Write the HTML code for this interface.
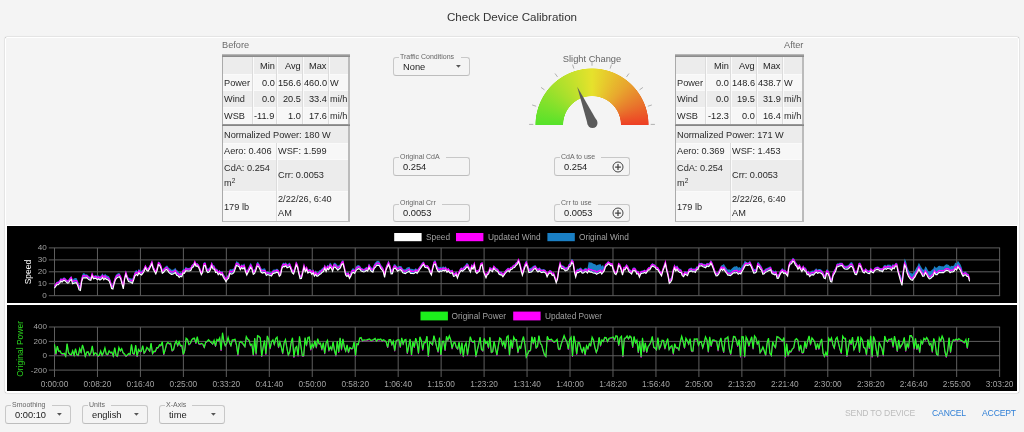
<!DOCTYPE html><html><head><meta charset="utf-8"><style>
html,body{margin:0;padding:0;}
body{width:1024px;height:432px;overflow:hidden;background:#f4f4f4;position:relative;font-family:"Liberation Sans", sans-serif;}
.t{position:absolute;white-space:nowrap;will-change:transform;}
.r{position:absolute;box-sizing:border-box;}
svg{position:absolute;will-change:transform;}
</style></head><body>
<div class="t" style="left:312px;width:400px;text-align:center;top:9.82px;font-size:11.6px;line-height:13.92px;color:#333;">Check Device Calibration</div>
<div class="r" style="left:5px;top:37px;width:1014px;height:356px;border:1px solid #fff;border-radius:2px;box-shadow:0 0 1.2px rgba(0,0,0,0.45);background:#f4f4f4;"></div>
<div class="t" style="left:222px;top:40.09px;font-size:9.2px;line-height:11.04px;color:#6a6a6a;">Before</div>
<div class="r" style="left:222px;top:54px;width:128px;height:168px;background:#f6f6f6;border-left:1px solid #aaa;border-right:2px solid #bbb;border-bottom:1px solid #bbb;"></div>
<div class="r" style="left:223px;top:57px;width:125px;height:17px;background:#ececec;"></div>
<div class="r" style="left:223px;top:74px;width:125px;height:16px;background:#f7f7f7;border-top:1px solid #fafafa;"></div>
<div class="r" style="left:223px;top:90px;width:125px;height:17px;background:#ececec;border-top:1px solid #fafafa;"></div>
<div class="r" style="left:223px;top:107px;width:125px;height:17px;background:#f7f7f7;border-top:1px solid #fafafa;"></div>
<div class="r" style="left:252px;top:57px;width:1px;height:67px;background:#dcdcdc;"></div>
<div class="r" style="left:253px;top:57px;width:1px;height:67px;background:#fbfbfb;"></div>
<div class="r" style="left:276px;top:57px;width:1px;height:67px;background:#dcdcdc;"></div>
<div class="r" style="left:277px;top:57px;width:1px;height:67px;background:#fbfbfb;"></div>
<div class="r" style="left:302px;top:57px;width:1px;height:67px;background:#dcdcdc;"></div>
<div class="r" style="left:303px;top:57px;width:1px;height:67px;background:#fbfbfb;"></div>
<div class="r" style="left:328px;top:57px;width:1px;height:67px;background:#dcdcdc;"></div>
<div class="r" style="left:329px;top:57px;width:1px;height:67px;background:#fbfbfb;"></div>
<div class="r" style="left:222px;top:54px;width:128px;height:3px;background:linear-gradient(#c4c4c4,#9a9a9a 50%,#858585);"></div>
<div class="r" style="left:223px;top:126px;width:125px;height:17px;background:#ececec;"></div>
<div class="r" style="left:223px;top:143px;width:125px;height:16px;background:#f7f7f7;border-top:1px solid #fafafa;"></div>
<div class="r" style="left:223px;top:159px;width:125px;height:32px;background:#ececec;border-top:1px solid #fafafa;"></div>
<div class="r" style="left:223px;top:191px;width:125px;height:30px;background:#f7f7f7;border-top:1px solid #fafafa;"></div>
<div class="r" style="left:276px;top:143px;width:1px;height:78px;background:#dcdcdc;"></div>
<div class="r" style="left:277px;top:143px;width:1px;height:78px;background:#fbfbfb;"></div>
<div class="r" style="left:222px;top:123.5px;width:128px;height:2.5px;background:linear-gradient(#a0a0a0,#7c7c7c);"></div>
<div class="t" style="right:749.5px;top:61.09px;font-size:9.2px;line-height:11.04px;color:#222;">Min</div>
<div class="t" style="right:723.5px;top:61.09px;font-size:9.2px;line-height:11.04px;color:#222;">Avg</div>
<div class="t" style="right:697.5px;top:61.09px;font-size:9.2px;line-height:11.04px;color:#222;">Max</div>
<div class="t" style="left:224px;top:77.79px;font-size:9.2px;line-height:11.04px;color:#2a2a2a;">Power</div>
<div class="t" style="right:749.5px;top:77.79px;font-size:9.2px;line-height:11.04px;color:#222;">0.0</div>
<div class="t" style="right:723.5px;top:77.79px;font-size:9.2px;line-height:11.04px;color:#222;">156.6</div>
<div class="t" style="right:697.5px;top:77.79px;font-size:9.2px;line-height:11.04px;color:#222;">460.0</div>
<div class="t" style="left:329.5px;top:77.79px;font-size:9.2px;line-height:11.04px;color:#2a2a2a;">W</div>
<div class="t" style="left:224px;top:94.29px;font-size:9.2px;line-height:11.04px;color:#2a2a2a;">Wind</div>
<div class="t" style="right:749.5px;top:94.29px;font-size:9.2px;line-height:11.04px;color:#222;">0.0</div>
<div class="t" style="right:723.5px;top:94.29px;font-size:9.2px;line-height:11.04px;color:#222;">20.5</div>
<div class="t" style="right:697.5px;top:94.29px;font-size:9.2px;line-height:11.04px;color:#222;">33.4</div>
<div class="t" style="left:329.5px;top:94.29px;font-size:9.2px;line-height:11.04px;color:#2a2a2a;">mi/h</div>
<div class="t" style="left:224px;top:110.79px;font-size:9.2px;line-height:11.04px;color:#2a2a2a;">WSB</div>
<div class="t" style="right:749.5px;top:110.79px;font-size:9.2px;line-height:11.04px;color:#222;">-11.9</div>
<div class="t" style="right:723.5px;top:110.79px;font-size:9.2px;line-height:11.04px;color:#222;">1.0</div>
<div class="t" style="right:697.5px;top:110.79px;font-size:9.2px;line-height:11.04px;color:#222;">17.6</div>
<div class="t" style="left:329.5px;top:110.79px;font-size:9.2px;line-height:11.04px;color:#2a2a2a;">mi/h</div>
<div class="t" style="left:224px;top:130.29px;font-size:9.2px;line-height:11.04px;color:#2a2a2a;">Normalized Power: 180 W</div>
<div class="t" style="left:224px;top:146.09px;font-size:9.2px;line-height:11.04px;color:#2a2a2a;">Aero: 0.406</div>
<div class="t" style="left:278px;top:146.09px;font-size:9.2px;line-height:11.04px;color:#2a2a2a;">WSF: 1.599</div>
<div class="t" style="left:224px;top:163.29px;font-size:9.2px;line-height:11.04px;color:#2a2a2a;">CdA: 0.254</div>
<div class="t" style="left:224px;top:177.69px;font-size:9.2px;line-height:11.04px;color:#2a2a2a;">m<sup style="font-size:6.5px;vertical-align:3.5px;line-height:0">2</sup></div>
<div class="t" style="left:278px;top:170.29px;font-size:9.2px;line-height:11.04px;color:#2a2a2a;">Crr: 0.0053</div>
<div class="t" style="left:224px;top:201.79px;font-size:9.2px;line-height:11.04px;color:#2a2a2a;">179 lb</div>
<div class="t" style="left:278px;top:193.59px;font-size:9.2px;line-height:11.04px;color:#2a2a2a;">2/22/26, 6:40</div>
<div class="t" style="left:278px;top:207.59px;font-size:9.2px;line-height:11.04px;color:#2a2a2a;">AM</div>
<div class="t" style="right:221px;top:40.09px;font-size:9.2px;line-height:11.04px;color:#6a6a6a;">After</div>
<div class="r" style="left:675px;top:54px;width:129px;height:168px;background:#f6f6f6;border-left:1px solid #aaa;border-right:2px solid #bbb;border-bottom:1px solid #bbb;"></div>
<div class="r" style="left:676px;top:57px;width:126px;height:17px;background:#ececec;"></div>
<div class="r" style="left:676px;top:74px;width:126px;height:16px;background:#f7f7f7;border-top:1px solid #fafafa;"></div>
<div class="r" style="left:676px;top:90px;width:126px;height:17px;background:#ececec;border-top:1px solid #fafafa;"></div>
<div class="r" style="left:676px;top:107px;width:126px;height:17px;background:#f7f7f7;border-top:1px solid #fafafa;"></div>
<div class="r" style="left:705px;top:57px;width:1px;height:67px;background:#dcdcdc;"></div>
<div class="r" style="left:706px;top:57px;width:1px;height:67px;background:#fbfbfb;"></div>
<div class="r" style="left:730px;top:57px;width:1px;height:67px;background:#dcdcdc;"></div>
<div class="r" style="left:731px;top:57px;width:1px;height:67px;background:#fbfbfb;"></div>
<div class="r" style="left:756px;top:57px;width:1px;height:67px;background:#dcdcdc;"></div>
<div class="r" style="left:757px;top:57px;width:1px;height:67px;background:#fbfbfb;"></div>
<div class="r" style="left:782px;top:57px;width:1px;height:67px;background:#dcdcdc;"></div>
<div class="r" style="left:783px;top:57px;width:1px;height:67px;background:#fbfbfb;"></div>
<div class="r" style="left:675px;top:54px;width:129px;height:3px;background:linear-gradient(#c4c4c4,#9a9a9a 50%,#858585);"></div>
<div class="r" style="left:676px;top:126px;width:126px;height:17px;background:#ececec;"></div>
<div class="r" style="left:676px;top:143px;width:126px;height:16px;background:#f7f7f7;border-top:1px solid #fafafa;"></div>
<div class="r" style="left:676px;top:159px;width:126px;height:32px;background:#ececec;border-top:1px solid #fafafa;"></div>
<div class="r" style="left:676px;top:191px;width:126px;height:30px;background:#f7f7f7;border-top:1px solid #fafafa;"></div>
<div class="r" style="left:730px;top:143px;width:1px;height:78px;background:#dcdcdc;"></div>
<div class="r" style="left:731px;top:143px;width:1px;height:78px;background:#fbfbfb;"></div>
<div class="r" style="left:675px;top:123.5px;width:129px;height:2.5px;background:linear-gradient(#a0a0a0,#7c7c7c);"></div>
<div class="t" style="right:295.5px;top:61.09px;font-size:9.2px;line-height:11.04px;color:#222;">Min</div>
<div class="t" style="right:269.5px;top:61.09px;font-size:9.2px;line-height:11.04px;color:#222;">Avg</div>
<div class="t" style="right:243.5px;top:61.09px;font-size:9.2px;line-height:11.04px;color:#222;">Max</div>
<div class="t" style="left:677px;top:77.79px;font-size:9.2px;line-height:11.04px;color:#2a2a2a;">Power</div>
<div class="t" style="right:295.5px;top:77.79px;font-size:9.2px;line-height:11.04px;color:#222;">0.0</div>
<div class="t" style="right:269.5px;top:77.79px;font-size:9.2px;line-height:11.04px;color:#222;">148.6</div>
<div class="t" style="right:243.5px;top:77.79px;font-size:9.2px;line-height:11.04px;color:#222;">438.7</div>
<div class="t" style="left:783.5px;top:77.79px;font-size:9.2px;line-height:11.04px;color:#2a2a2a;">W</div>
<div class="t" style="left:677px;top:94.29px;font-size:9.2px;line-height:11.04px;color:#2a2a2a;">Wind</div>
<div class="t" style="right:295.5px;top:94.29px;font-size:9.2px;line-height:11.04px;color:#222;">0.0</div>
<div class="t" style="right:269.5px;top:94.29px;font-size:9.2px;line-height:11.04px;color:#222;">19.5</div>
<div class="t" style="right:243.5px;top:94.29px;font-size:9.2px;line-height:11.04px;color:#222;">31.9</div>
<div class="t" style="left:783.5px;top:94.29px;font-size:9.2px;line-height:11.04px;color:#2a2a2a;">mi/h</div>
<div class="t" style="left:677px;top:110.79px;font-size:9.2px;line-height:11.04px;color:#2a2a2a;">WSB</div>
<div class="t" style="right:295.5px;top:110.79px;font-size:9.2px;line-height:11.04px;color:#222;">-12.3</div>
<div class="t" style="right:269.5px;top:110.79px;font-size:9.2px;line-height:11.04px;color:#222;">0.0</div>
<div class="t" style="right:243.5px;top:110.79px;font-size:9.2px;line-height:11.04px;color:#222;">16.4</div>
<div class="t" style="left:783.5px;top:110.79px;font-size:9.2px;line-height:11.04px;color:#2a2a2a;">mi/h</div>
<div class="t" style="left:677px;top:130.29px;font-size:9.2px;line-height:11.04px;color:#2a2a2a;">Normalized Power: 171 W</div>
<div class="t" style="left:677px;top:146.09px;font-size:9.2px;line-height:11.04px;color:#2a2a2a;">Aero: 0.369</div>
<div class="t" style="left:732px;top:146.09px;font-size:9.2px;line-height:11.04px;color:#2a2a2a;">WSF: 1.453</div>
<div class="t" style="left:677px;top:163.29px;font-size:9.2px;line-height:11.04px;color:#2a2a2a;">CdA: 0.254</div>
<div class="t" style="left:677px;top:177.69px;font-size:9.2px;line-height:11.04px;color:#2a2a2a;">m<sup style="font-size:6.5px;vertical-align:3.5px;line-height:0">2</sup></div>
<div class="t" style="left:732px;top:170.29px;font-size:9.2px;line-height:11.04px;color:#2a2a2a;">Crr: 0.0053</div>
<div class="t" style="left:677px;top:201.79px;font-size:9.2px;line-height:11.04px;color:#2a2a2a;">179 lb</div>
<div class="t" style="left:732px;top:193.59px;font-size:9.2px;line-height:11.04px;color:#2a2a2a;">2/22/26, 6:40</div>
<div class="t" style="left:732px;top:207.59px;font-size:9.2px;line-height:11.04px;color:#2a2a2a;">AM</div>
<div class="r" style="left:393px;top:57px;width:76.5px;height:19px;border:1px solid #c8c8c8;border-bottom-color:#bdbdbd;border-radius:3px;"></div>
<div class="r" style="left:398.5px;top:56px;width:62.4px;height:2px;background:#f4f4f4;"></div>
<div class="t" style="left:400px;top:52.67px;font-size:7px;line-height:8.40px;color:#666;">Traffic Conditions</div>
<div class="t" style="left:402.5px;top:61.90px;font-size:9.3px;line-height:11.16px;color:#222;">None</div>
<svg style="left:455.7px;top:65.4px" width="6" height="4"><path d="M0 0 L4.8 0 L2.4 2.7 Z" fill="#555"/></svg>
<div class="r" style="left:393px;top:157px;width:77px;height:19px;border:1px solid #c8c8c8;border-bottom-color:#bdbdbd;border-radius:3px;"></div>
<div class="r" style="left:398.5px;top:156px;width:47px;height:2px;background:#f4f4f4;"></div>
<div class="t" style="left:400px;top:152.67px;font-size:7px;line-height:8.40px;color:#666;">Original CdA</div>
<div class="t" style="left:402.5px;top:161.90px;font-size:9.3px;line-height:11.16px;color:#222;">0.254</div>
<div class="r" style="left:554px;top:157px;width:76px;height:19px;border:1px solid #c8c8c8;border-bottom-color:#bdbdbd;border-radius:3px;"></div>
<div class="r" style="left:559.5px;top:156px;width:41.7px;height:2px;background:#f4f4f4;"></div>
<div class="t" style="left:561px;top:152.67px;font-size:7px;line-height:8.40px;color:#666;">CdA to use</div>
<div class="t" style="left:563.5px;top:161.90px;font-size:9.3px;line-height:11.16px;color:#222;">0.254</div>
<svg style="left:611.1px;top:159.5px" width="14" height="14"><circle cx="7" cy="7" r="5.0" fill="none" stroke="#444" stroke-width="1.0"/><path d="M4.1 7 H9.9 M7 4.1 V9.9" stroke="#444" stroke-width="1.25"/></svg>
<div class="r" style="left:393px;top:203.5px;width:77px;height:18.5px;border:1px solid #c8c8c8;border-bottom-color:#bdbdbd;border-radius:3px;"></div>
<div class="r" style="left:398.5px;top:202.5px;width:43.5px;height:2px;background:#f4f4f4;"></div>
<div class="t" style="left:400px;top:199.17px;font-size:7px;line-height:8.40px;color:#666;">Original Crr</div>
<div class="t" style="left:402.5px;top:208.40px;font-size:9.3px;line-height:11.16px;color:#222;">0.0053</div>
<div class="r" style="left:554px;top:203.5px;width:76px;height:18.5px;border:1px solid #c8c8c8;border-bottom-color:#bdbdbd;border-radius:3px;"></div>
<div class="r" style="left:559.5px;top:202.5px;width:38.2px;height:2px;background:#f4f4f4;"></div>
<div class="t" style="left:561px;top:199.17px;font-size:7px;line-height:8.40px;color:#666;">Crr to use</div>
<div class="t" style="left:563.5px;top:208.40px;font-size:9.3px;line-height:11.16px;color:#222;">0.0053</div>
<svg style="left:611.1px;top:206.0px" width="14" height="14"><circle cx="7" cy="7" r="5.0" fill="none" stroke="#444" stroke-width="1.0"/><path d="M4.1 7 H9.9 M7 4.1 V9.9" stroke="#444" stroke-width="1.25"/></svg>
<div class="t" style="left:391.9px;width:400px;text-align:center;top:54.10px;font-size:9.3px;line-height:11.16px;color:#666;">Slight Change</div>
<div class="r" style="left:535.0px;top:68.30000000000001px;width:113.8px;height:56.9px;background:conic-gradient(from 270deg at 50% 100%, #55e22a 0deg, #a4e02c 45deg, #e6e22c 90deg, #e8a62e 130deg, #e8762c 155deg, #ee3e24 180deg, #ee3e24 360deg);-webkit-mask-image:radial-gradient(circle at 50% 100%, transparent 28.5px, #000 29.1px, #000 56.3px, transparent 56.9px);"></div>
<svg style="left:521.9px;top:55.2px" width="140" height="80"><path d="M11.30 69.40 L7.10 69.40 M14.17 51.26 L10.18 49.96 M22.51 34.90 L19.11 32.43 M35.50 21.91 L33.03 18.51 M51.86 13.57 L50.56 9.58 M70.00 10.70 L70.00 6.50 M88.14 13.57 L89.44 9.58 M104.50 21.91 L106.97 18.51 M117.49 34.90 L120.89 32.43 M125.83 51.26 L129.82 49.96 M128.70 69.40 L132.90 69.40" stroke="#a8a8a8" stroke-width="0.9"/></svg>
<svg style="left:521.9px;top:55.2px" width="140" height="80"><path d="M75.11 66.16 L55.20 31.80 L65.89 70.04 Z" fill="#5a5a5a"/><circle cx="70.50" cy="68.10" r="5.0" fill="#5a5a5a"/></svg>
<div class="r" style="left:6px;top:225px;width:1012px;height:79px;background:#000;border:1px solid #fff;"></div>
<div class="r" style="left:6px;top:304px;width:1012px;height:88px;background:#000;border:1px solid #fff;"></div>
<svg style="left:0;top:0" width="1024" height="432">
<line x1="54.50" y1="247.9" x2="54.50" y2="295.8" stroke="#5e5e5e" stroke-width="1"/>
<line x1="97.46" y1="247.9" x2="97.46" y2="295.8" stroke="#5e5e5e" stroke-width="1"/>
<line x1="140.42" y1="247.9" x2="140.42" y2="295.8" stroke="#5e5e5e" stroke-width="1"/>
<line x1="183.38" y1="247.9" x2="183.38" y2="295.8" stroke="#5e5e5e" stroke-width="1"/>
<line x1="226.34" y1="247.9" x2="226.34" y2="295.8" stroke="#5e5e5e" stroke-width="1"/>
<line x1="269.30" y1="247.9" x2="269.30" y2="295.8" stroke="#5e5e5e" stroke-width="1"/>
<line x1="312.26" y1="247.9" x2="312.26" y2="295.8" stroke="#5e5e5e" stroke-width="1"/>
<line x1="355.22" y1="247.9" x2="355.22" y2="295.8" stroke="#5e5e5e" stroke-width="1"/>
<line x1="398.18" y1="247.9" x2="398.18" y2="295.8" stroke="#5e5e5e" stroke-width="1"/>
<line x1="441.14" y1="247.9" x2="441.14" y2="295.8" stroke="#5e5e5e" stroke-width="1"/>
<line x1="484.10" y1="247.9" x2="484.10" y2="295.8" stroke="#5e5e5e" stroke-width="1"/>
<line x1="527.06" y1="247.9" x2="527.06" y2="295.8" stroke="#5e5e5e" stroke-width="1"/>
<line x1="570.02" y1="247.9" x2="570.02" y2="295.8" stroke="#5e5e5e" stroke-width="1"/>
<line x1="612.98" y1="247.9" x2="612.98" y2="295.8" stroke="#5e5e5e" stroke-width="1"/>
<line x1="655.94" y1="247.9" x2="655.94" y2="295.8" stroke="#5e5e5e" stroke-width="1"/>
<line x1="698.90" y1="247.9" x2="698.90" y2="295.8" stroke="#5e5e5e" stroke-width="1"/>
<line x1="741.86" y1="247.9" x2="741.86" y2="295.8" stroke="#5e5e5e" stroke-width="1"/>
<line x1="784.82" y1="247.9" x2="784.82" y2="295.8" stroke="#5e5e5e" stroke-width="1"/>
<line x1="827.78" y1="247.9" x2="827.78" y2="295.8" stroke="#5e5e5e" stroke-width="1"/>
<line x1="870.74" y1="247.9" x2="870.74" y2="295.8" stroke="#5e5e5e" stroke-width="1"/>
<line x1="913.70" y1="247.9" x2="913.70" y2="295.8" stroke="#5e5e5e" stroke-width="1"/>
<line x1="956.66" y1="247.9" x2="956.66" y2="295.8" stroke="#5e5e5e" stroke-width="1"/>
<line x1="999.62" y1="247.9" x2="999.62" y2="295.8" stroke="#5e5e5e" stroke-width="1"/>
<line x1="48.8" y1="247.9" x2="1000.1" y2="247.9" stroke="#5e5e5e" stroke-width="1"/>
<text x="46.7" y="250.30" fill="#a2a2a2" font-size="8.1" text-anchor="end">40</text>
<line x1="48.8" y1="259.9" x2="1000.1" y2="259.9" stroke="#5e5e5e" stroke-width="1"/>
<text x="46.7" y="262.30" fill="#a2a2a2" font-size="8.1" text-anchor="end">30</text>
<line x1="48.8" y1="271.8" x2="1000.1" y2="271.8" stroke="#5e5e5e" stroke-width="1"/>
<text x="46.7" y="274.20" fill="#a2a2a2" font-size="8.1" text-anchor="end">20</text>
<line x1="48.8" y1="283.7" x2="1000.1" y2="283.7" stroke="#5e5e5e" stroke-width="1"/>
<text x="46.7" y="286.10" fill="#a2a2a2" font-size="8.1" text-anchor="end">10</text>
<line x1="48.8" y1="295.7" x2="1000.1" y2="295.7" stroke="#5e5e5e" stroke-width="1"/>
<text x="46.7" y="298.10" fill="#a2a2a2" font-size="8.1" text-anchor="end">0</text>
<text transform="translate(30.6 272) rotate(-90)" fill="#fff" font-size="8.5" text-anchor="middle">Speed</text>
<rect x="394.2" y="233" width="27.4" height="8.2" fill="#fff"/>
<text x="426" y="240.2" fill="#a2a2a2" font-size="8.3">Speed</text>
<rect x="456" y="233" width="27.4" height="8.2" fill="#f0f"/>
<text x="488" y="240.2" fill="#a2a2a2" font-size="8.3">Updated Wind</text>
<rect x="547.4" y="233" width="27.4" height="8.2" fill="#1a7fc4"/>
<text x="579" y="240.2" fill="#a2a2a2" font-size="8.3">Original Wind</text>
<line x1="54.50" y1="327" x2="54.50" y2="377" stroke="#5e5e5e" stroke-width="1"/>
<text x="54.50" y="387" fill="#a2a2a2" font-size="8.3" text-anchor="middle">0:00:00</text>
<line x1="97.46" y1="327" x2="97.46" y2="377" stroke="#5e5e5e" stroke-width="1"/>
<text x="97.46" y="387" fill="#a2a2a2" font-size="8.3" text-anchor="middle">0:08:20</text>
<line x1="140.42" y1="327" x2="140.42" y2="377" stroke="#5e5e5e" stroke-width="1"/>
<text x="140.42" y="387" fill="#a2a2a2" font-size="8.3" text-anchor="middle">0:16:40</text>
<line x1="183.38" y1="327" x2="183.38" y2="377" stroke="#5e5e5e" stroke-width="1"/>
<text x="183.38" y="387" fill="#a2a2a2" font-size="8.3" text-anchor="middle">0:25:00</text>
<line x1="226.34" y1="327" x2="226.34" y2="377" stroke="#5e5e5e" stroke-width="1"/>
<text x="226.34" y="387" fill="#a2a2a2" font-size="8.3" text-anchor="middle">0:33:20</text>
<line x1="269.30" y1="327" x2="269.30" y2="377" stroke="#5e5e5e" stroke-width="1"/>
<text x="269.30" y="387" fill="#a2a2a2" font-size="8.3" text-anchor="middle">0:41:40</text>
<line x1="312.26" y1="327" x2="312.26" y2="377" stroke="#5e5e5e" stroke-width="1"/>
<text x="312.26" y="387" fill="#a2a2a2" font-size="8.3" text-anchor="middle">0:50:00</text>
<line x1="355.22" y1="327" x2="355.22" y2="377" stroke="#5e5e5e" stroke-width="1"/>
<text x="355.22" y="387" fill="#a2a2a2" font-size="8.3" text-anchor="middle">0:58:20</text>
<line x1="398.18" y1="327" x2="398.18" y2="377" stroke="#5e5e5e" stroke-width="1"/>
<text x="398.18" y="387" fill="#a2a2a2" font-size="8.3" text-anchor="middle">1:06:40</text>
<line x1="441.14" y1="327" x2="441.14" y2="377" stroke="#5e5e5e" stroke-width="1"/>
<text x="441.14" y="387" fill="#a2a2a2" font-size="8.3" text-anchor="middle">1:15:00</text>
<line x1="484.10" y1="327" x2="484.10" y2="377" stroke="#5e5e5e" stroke-width="1"/>
<text x="484.10" y="387" fill="#a2a2a2" font-size="8.3" text-anchor="middle">1:23:20</text>
<line x1="527.06" y1="327" x2="527.06" y2="377" stroke="#5e5e5e" stroke-width="1"/>
<text x="527.06" y="387" fill="#a2a2a2" font-size="8.3" text-anchor="middle">1:31:40</text>
<line x1="570.02" y1="327" x2="570.02" y2="377" stroke="#5e5e5e" stroke-width="1"/>
<text x="570.02" y="387" fill="#a2a2a2" font-size="8.3" text-anchor="middle">1:40:00</text>
<line x1="612.98" y1="327" x2="612.98" y2="377" stroke="#5e5e5e" stroke-width="1"/>
<text x="612.98" y="387" fill="#a2a2a2" font-size="8.3" text-anchor="middle">1:48:20</text>
<line x1="655.94" y1="327" x2="655.94" y2="377" stroke="#5e5e5e" stroke-width="1"/>
<text x="655.94" y="387" fill="#a2a2a2" font-size="8.3" text-anchor="middle">1:56:40</text>
<line x1="698.90" y1="327" x2="698.90" y2="377" stroke="#5e5e5e" stroke-width="1"/>
<text x="698.90" y="387" fill="#a2a2a2" font-size="8.3" text-anchor="middle">2:05:00</text>
<line x1="741.86" y1="327" x2="741.86" y2="377" stroke="#5e5e5e" stroke-width="1"/>
<text x="741.86" y="387" fill="#a2a2a2" font-size="8.3" text-anchor="middle">2:13:20</text>
<line x1="784.82" y1="327" x2="784.82" y2="377" stroke="#5e5e5e" stroke-width="1"/>
<text x="784.82" y="387" fill="#a2a2a2" font-size="8.3" text-anchor="middle">2:21:40</text>
<line x1="827.78" y1="327" x2="827.78" y2="377" stroke="#5e5e5e" stroke-width="1"/>
<text x="827.78" y="387" fill="#a2a2a2" font-size="8.3" text-anchor="middle">2:30:00</text>
<line x1="870.74" y1="327" x2="870.74" y2="377" stroke="#5e5e5e" stroke-width="1"/>
<text x="870.74" y="387" fill="#a2a2a2" font-size="8.3" text-anchor="middle">2:38:20</text>
<line x1="913.70" y1="327" x2="913.70" y2="377" stroke="#5e5e5e" stroke-width="1"/>
<text x="913.70" y="387" fill="#a2a2a2" font-size="8.3" text-anchor="middle">2:46:40</text>
<line x1="956.66" y1="327" x2="956.66" y2="377" stroke="#5e5e5e" stroke-width="1"/>
<text x="956.66" y="387" fill="#a2a2a2" font-size="8.3" text-anchor="middle">2:55:00</text>
<line x1="999.62" y1="327" x2="999.62" y2="377" stroke="#5e5e5e" stroke-width="1"/>
<text x="999.62" y="387" fill="#a2a2a2" font-size="8.3" text-anchor="middle">3:03:20</text>
<line x1="48.8" y1="327" x2="1000.1" y2="327" stroke="#5e5e5e" stroke-width="1"/>
<text x="46.9" y="329.40" fill="#a2a2a2" font-size="8.1" text-anchor="end">400</text>
<line x1="48.8" y1="341.4" x2="1000.1" y2="341.4" stroke="#5e5e5e" stroke-width="1"/>
<text x="46.9" y="343.80" fill="#a2a2a2" font-size="8.1" text-anchor="end">200</text>
<line x1="48.8" y1="355.75" x2="1000.1" y2="355.75" stroke="#5e5e5e" stroke-width="1"/>
<text x="46.9" y="358.15" fill="#a2a2a2" font-size="8.1" text-anchor="end">0</text>
<line x1="48.8" y1="370.1" x2="1000.1" y2="370.1" stroke="#5e5e5e" stroke-width="1"/>
<text x="46.9" y="372.50" fill="#a2a2a2" font-size="8.1" text-anchor="end">-200</text>
<text transform="translate(23.2 348.9) rotate(-90)" fill="#2ad21e" font-size="8.5" text-anchor="middle">Original Power</text>
<rect x="420.5" y="311.6" width="27.4" height="8.8" fill="#1cf01c"/>
<text x="451.6" y="319" fill="#a2a2a2" font-size="8.3">Original Power</text>
<rect x="513.2" y="311.6" width="27.4" height="8.8" fill="#f0f"/>
<text x="544.9" y="319" fill="#a2a2a2" font-size="8.3">Updated Power</text>
<polygon points="54.4,285.25 55.7,283.47 57.0,281.44 58.3,281.42 59.6,280.04 60.9,278.03 62.2,278.89 63.5,277.39 64.8,277.52 66.1,278.88 67.4,279.94 68.7,279.40 70.0,277.18 71.3,275.98 72.6,280.11 73.9,278.39 75.2,277.98 76.5,277.96 77.8,280.80 79.1,284.58 80.4,285.59 81.7,276.66 83.0,273.21 84.3,273.32 85.6,274.49 86.9,274.24 88.2,275.61 89.5,276.43 90.8,277.36 92.1,272.83 93.4,276.05 94.7,275.38 96.0,275.02 97.3,276.26 98.6,275.26 99.9,276.45 101.2,275.14 102.5,273.33 103.8,275.41 105.1,273.74 106.4,275.14 107.7,275.76 109.0,276.31 110.3,279.45 111.6,284.00 112.9,284.82 114.2,279.60 115.5,275.60 116.8,274.02 118.1,273.24 119.4,272.93 120.7,275.82 122.0,280.57 123.3,285.77 124.6,276.36 125.9,271.02 127.2,275.25 128.5,277.82 129.8,278.07 131.1,278.39 132.4,278.75 133.7,275.38 135.0,271.32 136.3,269.89 137.6,271.40 138.9,268.77 140.2,270.64 141.5,270.79 142.8,269.78 144.1,268.00 145.4,264.74 146.7,267.22 148.0,268.02 149.3,266.21 150.6,263.43 151.9,260.51 153.2,266.01 154.5,268.19 155.8,270.67 157.1,267.02 158.4,261.40 159.7,262.21 161.0,264.79 162.3,269.69 163.6,268.34 164.9,267.22 166.2,265.71 167.5,265.85 168.8,268.00 170.1,268.54 171.4,269.75 172.7,269.68 174.0,269.26 175.3,267.74 176.6,270.02 177.9,270.73 179.2,273.06 180.5,271.99 181.8,272.97 183.1,268.80 184.4,269.16 185.7,266.73 187.0,267.66 188.3,268.11 189.6,267.83 190.9,266.94 192.2,264.23 193.5,263.65 194.8,260.64 196.1,263.62 197.4,263.03 198.7,264.69 200.0,268.09 201.3,271.73 202.6,269.27 203.9,262.32 205.2,261.94 206.5,267.04 207.8,268.74 209.1,268.11 210.4,265.75 211.7,261.86 213.0,264.93 214.3,265.28 215.6,268.98 216.9,268.52 218.2,271.27 219.5,269.69 220.8,271.92 222.1,270.73 223.4,273.94 224.7,275.82 226.0,278.15 227.3,275.40 228.6,274.05 229.9,268.95 231.2,269.42 232.5,268.88 233.8,268.47 235.1,265.02 236.4,261.11 237.7,261.96 239.0,262.85 240.3,266.13 241.6,264.13 242.9,264.94 244.2,263.33 245.5,267.72 246.8,270.72 248.1,268.19 249.4,265.37 250.7,262.85 252.0,265.18 253.3,269.96 254.6,269.35 255.9,266.18 257.2,261.72 258.5,262.56 259.8,265.05 261.1,268.33 262.4,269.09 263.7,268.42 265.0,268.37 266.3,271.75 267.6,271.30 268.9,271.66 270.2,271.90 271.5,272.60 272.8,269.85 274.1,269.41 275.4,269.39 276.7,268.87 278.0,269.04 279.3,272.17 280.6,271.18 281.9,264.64 283.2,262.48 284.5,263.37 285.8,262.35 287.1,264.30 288.4,263.51 289.7,262.51 291.0,265.99 292.3,269.43 293.6,270.25 294.9,266.64 296.2,261.44 297.5,263.77 298.8,270.31 300.1,275.19 301.4,275.22 302.7,269.80 304.0,264.00 305.3,268.36 306.6,266.21 307.9,270.12 309.2,268.95 310.5,268.98 311.8,270.88 313.1,269.14 314.4,272.60 315.7,270.34 317.0,272.65 318.3,272.09 319.6,270.11 320.9,269.73 322.2,268.11 323.5,267.60 324.8,264.50 326.1,267.65 327.4,264.84 328.7,265.75 330.0,262.62 331.3,264.00 332.6,266.61 333.9,262.67 335.2,262.64 336.5,264.05 337.8,265.66 339.1,265.05 340.4,264.02 341.7,261.00 343.0,260.11 344.3,265.91 345.6,271.83 346.9,272.71 348.2,271.76 349.5,274.46 350.8,272.02 352.1,268.87 353.4,268.24 354.7,269.62 356.0,266.51 357.3,265.32 358.6,264.97 359.9,265.66 361.2,267.84 362.5,268.31 363.8,268.90 365.1,268.01 366.4,266.80 367.7,267.91 369.0,263.55 370.3,266.12 371.6,267.52 372.9,267.85 374.2,263.88 375.5,262.19 376.8,260.95 378.1,260.72 379.4,261.24 380.7,264.54 382.0,265.99 383.3,267.88 384.6,273.02 385.9,266.46 387.2,263.45 388.5,260.31 389.8,263.70 391.1,269.31 392.4,269.13 393.7,264.62 395.0,263.88 396.3,265.77 397.6,266.99 398.9,266.11 400.2,265.97 401.5,266.37 402.8,268.70 404.1,269.22 405.4,269.34 406.7,267.81 408.0,267.29 409.3,266.87 410.6,268.97 411.9,268.85 413.2,269.29 414.5,269.14 415.8,267.91 417.1,269.46 418.4,268.00 419.7,266.27 421.0,264.61 422.3,262.54 423.6,261.60 424.9,264.73 426.2,265.54 427.5,265.23 428.8,266.80 430.1,269.76 431.4,271.81 432.7,265.60 434.0,260.87 435.3,260.04 436.6,264.30 437.9,266.83 439.2,267.58 440.5,266.65 441.8,267.57 443.1,266.28 444.4,267.25 445.7,266.33 447.0,268.92 448.3,267.72 449.6,269.77 450.9,270.50 452.2,269.58 453.5,273.30 454.8,272.86 456.1,271.27 457.4,274.82 458.7,271.47 460.0,268.79 461.3,267.13 462.6,267.88 463.9,266.25 465.2,265.22 466.5,262.93 467.8,263.19 469.1,266.18 470.4,268.29 471.7,264.02 473.0,265.55 474.3,262.16 475.6,268.96 476.9,270.51 478.2,269.75 479.5,268.67 480.8,262.90 482.1,262.23 483.4,268.75 484.7,272.31 486.0,275.03 487.3,271.90 488.6,271.33 489.9,267.11 491.2,267.86 492.5,268.69 493.8,265.22 495.1,266.69 496.4,267.97 497.7,268.62 499.0,270.66 500.3,271.42 501.6,271.39 502.9,273.49 504.2,271.91 505.5,270.00 506.8,268.71 508.1,267.59 509.4,268.54 510.7,266.80 512.0,266.81 513.3,264.87 514.6,264.59 515.9,262.36 517.2,261.50 518.5,258.39 519.8,261.96 521.1,267.20 522.4,271.14 523.7,266.70 525.0,262.70 526.3,260.37 527.6,263.52 528.9,268.54 530.2,267.90 531.5,267.55 532.8,266.33 534.1,265.43 535.4,265.06 536.7,267.16 538.0,268.60 539.3,267.36 540.6,268.49 541.9,269.49 543.2,268.99 544.5,269.37 545.8,270.19 547.1,273.80 548.4,271.31 549.7,269.95 551.0,270.35 552.3,272.87 553.6,272.21 554.9,275.70 556.2,279.97 557.5,276.53 558.8,267.41 560.1,261.72 561.4,265.25 562.7,265.25 564.0,265.93 565.3,267.36 566.6,267.04 567.9,266.51 569.2,263.06 570.5,262.69 571.8,258.69 573.1,259.91 574.4,267.89 575.7,272.97 577.0,268.50 578.3,268.95 579.6,267.93 580.9,267.54 582.2,269.15 583.5,269.39 584.8,268.11 586.1,267.71 587.4,269.01 588.7,261.93 590.0,262.54 591.3,262.40 592.6,263.35 593.9,263.98 595.2,264.27 596.5,265.39 597.8,264.81 599.1,264.49 600.4,263.88 601.7,266.43 603.0,264.78 604.3,267.97 605.6,263.68 606.9,262.61 608.2,261.13 609.5,261.93 610.8,263.25 612.1,262.96 613.4,267.73 614.7,271.27 616.0,272.15 617.3,269.15 618.6,262.82 619.9,264.05 621.2,267.13 622.5,272.34 623.8,266.47 625.1,266.71 626.4,264.02 627.7,265.48 629.0,268.53 630.3,269.56 631.6,270.84 632.9,267.77 634.2,267.37 635.5,267.90 636.8,270.98 638.1,270.61 639.4,274.12 640.7,271.08 642.0,270.44 643.3,270.53 644.6,269.46 645.9,270.69 647.2,269.10 648.5,267.09 649.8,267.01 651.1,264.28 652.4,263.20 653.7,263.94 655.0,264.47 656.3,266.81 657.6,266.71 658.9,268.48 660.2,270.93 661.5,273.07 662.8,268.31 664.1,264.85 665.4,260.72 666.7,267.42 668.0,272.17 669.3,279.32 670.6,278.29 671.9,276.00 673.2,268.55 674.5,264.19 675.8,266.70 677.1,265.16 678.4,267.38 679.7,268.81 681.0,268.91 682.3,272.40 683.6,273.50 684.9,270.72 686.2,271.48 687.5,272.08 688.8,268.42 690.1,267.89 691.4,267.41 692.7,268.67 694.0,268.13 695.3,268.69 696.6,266.14 697.9,266.41 699.2,262.82 700.5,263.10 701.8,262.69 703.1,263.74 704.4,263.83 705.7,264.31 707.0,262.69 708.3,263.16 709.6,262.53 710.9,260.14 712.2,262.23 713.5,265.95 714.8,269.48 716.1,272.52 717.4,272.46 718.7,270.86 720.0,267.91 721.3,265.51 722.6,264.95 723.9,264.08 725.2,266.21 726.5,268.03 727.8,269.75 729.1,269.20 730.4,269.95 731.7,268.72 733.0,267.41 734.3,266.53 735.6,266.43 736.9,266.10 738.2,267.83 739.5,267.04 740.8,268.19 742.1,265.71 743.4,263.93 744.7,260.86 746.0,261.63 747.3,262.48 748.6,262.19 749.9,260.84 751.2,263.40 752.5,266.15 753.8,269.08 755.1,268.96 756.4,267.95 757.7,261.70 759.0,262.61 760.3,264.46 761.6,266.19 762.9,270.17 764.2,270.08 765.5,268.47 766.8,267.99 768.1,267.38 769.4,266.78 770.7,266.22 772.0,270.32 773.3,270.59 774.6,271.26 775.9,270.34 777.2,274.31 778.5,274.43 779.8,271.48 781.1,269.41 782.4,268.01 783.7,269.68 785.0,269.39 786.3,271.16 787.6,272.86 788.9,264.11 790.2,261.00 791.5,260.57 792.8,257.74 794.1,258.60 795.4,261.73 796.7,263.07 798.0,266.03 799.3,264.06 800.6,266.25 801.9,268.52 803.2,265.37 804.5,267.42 805.8,267.58 807.1,271.37 808.4,270.49 809.7,272.75 811.0,271.12 812.3,270.45 813.6,270.83 814.9,269.38 816.2,268.29 817.5,269.70 818.8,269.07 820.1,269.11 821.4,269.67 822.7,271.10 824.0,274.36 825.3,274.79 826.6,269.22 827.9,269.58 829.2,272.42 830.5,277.43 831.8,277.96 833.1,271.98 834.4,269.62 835.7,267.59 837.0,263.31 838.3,263.40 839.6,262.78 840.9,262.72 842.2,262.75 843.5,264.79 844.8,265.68 846.1,265.80 847.4,265.40 848.7,264.63 850.0,262.93 851.3,261.90 852.6,262.99 853.9,267.09 855.2,270.76 856.5,271.02 857.8,267.43 859.1,262.41 860.4,262.77 861.7,266.70 863.0,269.39 864.3,270.03 865.6,268.01 866.9,269.56 868.2,270.36 869.5,270.31 870.8,267.81 872.1,269.59 873.4,269.94 874.7,267.62 876.0,266.97 877.3,266.62 878.6,266.84 879.9,267.97 881.2,268.00 882.5,267.97 883.8,265.46 885.1,264.86 886.4,265.69 887.7,264.44 889.0,264.78 890.3,264.66 891.6,266.10 892.9,263.79 894.2,265.38 895.5,262.96 896.8,262.77 898.1,268.59 899.4,273.28 900.7,274.99 902.0,278.87 903.3,266.96 904.6,258.58 905.9,261.01 907.2,266.57 908.5,269.88 909.8,272.17 911.1,273.03 912.4,273.84 913.7,272.26 915.0,270.57 916.3,267.87 917.6,266.01 918.9,262.70 920.2,265.33 921.5,267.39 922.8,269.62 924.1,269.63 925.4,266.31 926.7,267.85 928.0,270.39 929.3,271.82 930.6,271.35 931.9,269.80 933.2,268.93 934.5,265.97 935.8,267.69 937.1,267.39 938.4,266.06 939.7,265.64 941.0,266.20 942.3,266.17 943.6,266.53 944.9,265.17 946.2,264.14 947.5,264.53 948.8,264.90 950.1,266.81 951.4,265.77 952.7,266.00 954.0,265.50 955.3,262.61 956.6,263.67 957.9,260.87 959.2,262.52 960.5,264.41 961.8,267.79 963.1,272.92 964.4,271.69 965.7,271.41 967.0,273.22 968.3,273.58 969.6,278.17 969.6,280.93 968.3,276.25 967.0,275.98 965.7,274.48 964.4,274.61 963.1,275.84 961.8,273.50 960.5,270.08 959.2,268.22 957.9,266.58 956.6,269.57 955.3,268.45 954.0,270.97 952.7,271.58 951.4,271.34 950.1,272.24 948.8,270.51 947.5,270.07 946.2,270.05 944.9,270.97 943.6,272.33 942.3,272.02 941.0,272.29 939.7,272.04 938.4,272.68 937.1,274.18 935.8,274.21 934.5,272.13 933.2,275.85 931.9,276.62 930.6,278.13 929.3,278.50 928.0,276.80 926.7,274.05 925.4,272.31 924.1,275.64 922.8,275.86 921.5,273.33 920.2,271.27 918.9,268.67 917.6,271.89 916.3,273.70 915.0,276.56 913.7,278.07 912.4,279.96 911.1,279.34 909.8,278.06 908.5,275.96 907.2,272.94 905.9,267.13 904.6,264.85 903.3,273.08 902.0,284.95 900.7,281.27 899.4,276.33 898.1,271.64 896.8,265.61 895.5,265.60 894.2,268.31 892.9,267.41 891.6,269.92 890.3,268.51 889.0,268.40 887.7,267.93 886.4,268.96 885.1,268.33 883.8,269.02 882.5,271.24 881.2,270.51 879.9,270.47 878.6,269.39 877.3,268.94 876.0,269.29 874.7,270.18 873.4,272.41 872.1,271.79 870.8,270.47 869.5,273.14 868.2,273.09 866.9,272.22 865.6,270.73 864.3,272.63 863.0,271.77 861.7,269.17 860.4,265.74 859.1,265.24 857.8,270.32 856.5,274.21 855.2,274.09 853.9,270.79 852.6,266.84 851.3,265.71 850.0,266.58 848.7,268.07 847.4,268.70 846.1,268.88 844.8,268.55 843.5,267.57 842.2,265.26 840.9,265.26 839.6,265.64 838.3,266.31 837.0,266.32 835.7,270.64 834.4,273.01 833.1,275.32 831.8,281.50 830.5,281.10 829.2,275.99 827.9,273.06 826.6,272.81 825.3,278.26 824.0,277.68 822.7,274.47 821.4,273.08 820.1,272.32 818.8,272.23 817.5,272.97 816.2,271.67 814.9,273.02 813.6,274.60 812.3,274.19 811.0,274.62 809.7,276.13 808.4,273.75 807.1,274.40 805.8,270.84 804.5,270.43 803.2,268.22 801.9,271.14 800.6,269.11 799.3,266.75 798.0,268.86 796.7,266.02 795.4,264.68 794.1,261.47 792.8,260.83 791.5,263.31 790.2,263.53 788.9,266.52 787.6,275.62 786.3,273.93 785.0,272.40 783.7,273.09 782.4,271.15 781.1,272.28 779.8,274.67 778.5,277.76 777.2,277.88 775.9,273.66 774.6,274.51 773.3,273.71 772.0,273.09 770.7,269.43 769.4,269.94 768.1,270.56 766.8,271.36 765.5,271.69 764.2,273.42 762.9,273.84 761.6,269.80 760.3,268.43 759.0,266.39 757.7,265.59 756.4,271.62 755.1,272.64 753.8,272.73 752.5,269.60 751.2,266.43 749.9,263.97 748.6,264.90 747.3,264.99 746.0,264.46 744.7,266.00 743.4,268.89 742.1,270.85 740.8,273.47 739.5,272.85 738.2,273.86 736.9,272.02 735.6,272.58 734.3,272.30 733.0,272.90 731.7,274.14 730.4,275.28 729.1,274.72 727.8,274.77 726.5,272.65 725.2,271.03 723.9,268.62 722.6,270.01 721.3,268.50 720.0,270.94 718.7,273.82 717.4,275.25 716.1,275.42 714.8,272.58 713.5,269.02 712.2,265.45 710.9,262.94 709.6,265.41 708.3,266.10 707.0,265.59 705.7,267.28 704.4,266.72 703.1,266.43 701.8,265.26 700.5,265.55 699.2,265.52 697.9,269.38 696.6,269.39 695.3,272.00 694.0,271.16 692.7,271.55 691.4,270.47 690.1,270.97 688.8,271.57 687.5,275.20 686.2,274.46 684.9,273.75 683.6,276.29 682.3,275.21 681.0,271.94 679.7,272.08 678.4,271.06 677.1,268.94 675.8,270.46 674.5,267.76 673.2,271.85 671.9,279.42 670.6,281.68 669.3,282.95 668.0,275.52 666.7,270.29 665.4,263.48 664.1,267.29 662.8,270.66 661.5,275.41 660.2,273.39 658.9,271.26 657.6,269.05 656.3,268.92 655.0,266.90 653.7,266.36 652.4,265.68 651.1,266.98 649.8,269.60 648.5,269.43 647.2,271.19 645.9,272.93 644.6,271.96 643.3,272.89 642.0,272.87 640.7,273.51 639.4,276.69 638.1,273.26 636.8,273.68 635.5,270.60 634.2,270.24 632.9,270.40 631.6,273.63 630.3,272.48 629.0,271.48 627.7,268.32 626.4,266.83 625.1,269.47 623.8,269.21 622.5,274.73 621.2,269.55 619.9,266.25 618.6,264.97 617.3,271.44 616.0,274.22 614.7,273.15 613.4,269.85 612.1,265.11 610.8,265.53 609.5,264.13 608.2,263.45 606.9,265.16 605.6,266.01 604.3,270.32 603.0,272.00 601.7,273.57 600.4,271.64 599.1,272.54 597.8,273.08 596.5,273.92 595.2,272.66 593.9,272.67 592.6,272.37 591.3,271.50 590.0,271.64 588.7,270.46 587.4,272.67 586.1,271.30 584.8,271.37 583.5,272.50 582.2,272.70 580.9,270.87 579.6,271.41 578.3,272.25 577.0,272.04 575.7,276.69 574.4,271.56 573.1,263.48 571.8,262.24 570.5,265.77 569.2,266.36 567.9,269.34 566.6,270.16 565.3,270.53 564.0,268.94 562.7,268.19 561.4,268.17 560.1,264.53 558.8,270.01 557.5,278.89 556.2,282.38 554.9,278.23 553.6,274.39 552.3,275.06 551.0,272.76 549.7,272.49 548.4,273.81 547.1,276.38 545.8,272.86 544.5,271.88 543.2,271.51 541.9,272.26 540.6,271.72 539.3,270.48 538.0,271.63 536.7,270.24 535.4,267.99 534.1,268.48 532.8,270.24 531.5,271.48 530.2,271.81 528.9,272.13 527.6,267.03 526.3,264.02 525.0,266.44 523.7,270.75 522.4,274.92 521.1,270.19 519.8,264.82 518.5,261.10 517.2,264.00 515.9,265.07 514.6,267.09 513.3,267.27 512.0,268.89 510.7,269.15 509.4,271.39 508.1,270.25 506.8,271.26 505.5,272.60 504.2,274.42 502.9,276.26 501.6,274.42 500.3,274.47 499.0,273.72 497.7,271.09 496.4,270.68 495.1,269.39 493.8,267.92 492.5,271.21 491.2,270.36 489.9,269.27 488.6,273.48 487.3,274.24 486.0,277.42 484.7,274.36 483.4,270.97 482.1,264.36 480.8,265.12 479.5,270.71 478.2,271.78 476.9,273.10 475.6,271.54 474.3,265.09 473.0,268.63 471.7,267.11 470.4,271.58 469.1,269.41 467.8,266.53 466.5,266.74 465.2,268.71 463.9,269.49 462.6,270.94 461.3,270.04 460.0,271.55 458.7,274.06 457.4,277.74 456.1,274.20 454.8,275.59 453.5,275.94 452.2,272.09 450.9,272.84 449.6,272.30 448.3,270.41 447.0,271.79 445.7,269.65 444.4,270.62 443.1,269.75 441.8,271.03 440.5,270.54 439.2,271.66 437.9,270.90 436.6,268.19 435.3,263.77 434.0,263.80 432.7,268.57 431.4,274.47 430.1,272.35 428.8,268.99 427.5,267.19 426.2,267.37 424.9,266.84 423.6,264.08 422.3,265.25 421.0,267.26 419.7,269.07 418.4,271.06 417.1,272.87 415.8,271.65 414.5,272.89 413.2,273.31 411.9,272.91 410.6,273.08 409.3,270.83 408.0,271.63 406.7,272.08 405.4,273.20 404.1,272.75 402.8,272.37 401.5,270.10 400.2,269.32 398.9,269.79 397.6,270.72 396.3,269.07 395.0,267.54 393.7,268.49 392.4,273.34 391.1,273.45 389.8,267.34 388.5,264.29 387.2,266.83 385.9,270.08 384.6,276.87 383.3,271.43 382.0,269.34 380.7,268.07 379.4,265.43 378.1,264.93 376.8,264.84 375.5,266.65 374.2,267.99 372.9,271.72 371.6,271.15 370.3,269.72 369.0,267.09 367.7,270.76 366.4,269.83 365.1,271.07 363.8,271.57 362.5,271.05 361.2,270.55 359.9,268.92 358.6,268.35 357.3,269.02 356.0,270.18 354.7,273.05 353.4,272.00 352.1,272.56 350.8,275.73 349.5,278.05 348.2,274.83 346.9,275.95 345.6,274.48 344.3,268.58 343.0,263.19 341.7,264.05 340.4,267.42 339.1,268.64 337.8,269.68 336.5,268.15 335.2,266.68 333.9,266.78 332.6,270.74 331.3,267.87 330.0,266.57 328.7,269.32 327.4,268.11 326.1,271.14 324.8,267.90 323.5,271.08 322.2,271.78 320.9,273.43 319.6,273.97 318.3,275.47 317.0,275.97 315.7,274.09 314.4,275.69 313.1,272.36 311.8,273.87 310.5,271.87 309.2,271.67 307.9,272.67 306.6,268.99 305.3,271.16 304.0,266.95 302.7,272.75 301.4,278.15 300.1,278.16 298.8,273.26 297.5,266.93 296.2,264.65 294.9,269.74 293.6,273.52 292.3,272.48 291.0,269.08 289.7,265.91 288.4,266.93 287.1,267.39 285.8,265.48 284.5,266.43 283.2,266.04 281.9,267.97 280.6,274.44 279.3,275.70 278.0,272.12 276.7,271.77 275.4,272.51 274.1,272.76 272.8,273.29 271.5,275.58 270.2,275.14 268.9,274.67 267.6,274.17 266.3,275.04 265.0,272.23 263.7,272.29 262.4,272.69 261.1,271.86 259.8,268.60 258.5,266.18 257.2,265.60 255.9,269.91 254.6,273.05 253.3,273.98 252.0,269.15 250.7,266.98 249.4,269.32 248.1,271.95 246.8,274.63 245.5,271.40 244.2,267.20 242.9,268.49 241.6,267.23 240.3,269.41 239.0,266.22 237.7,265.63 236.4,265.13 235.1,268.78 233.8,272.28 232.5,273.31 231.2,273.80 229.9,272.94 228.6,277.98 227.3,278.90 226.0,281.35 224.7,278.95 223.4,277.06 222.1,273.93 220.8,274.65 219.5,272.79 218.2,274.36 216.9,271.65 215.6,272.10 214.3,268.71 213.0,268.51 211.7,265.51 210.4,269.45 209.1,271.58 207.8,272.16 206.5,270.39 205.2,265.03 203.9,265.39 202.6,272.07 201.3,274.24 200.0,270.74 198.7,267.25 197.4,265.54 196.1,265.91 194.8,263.04 193.5,266.32 192.2,266.97 190.9,269.85 189.6,270.55 188.3,270.56 187.0,270.52 185.7,270.50 184.4,272.92 183.1,272.49 181.8,276.32 180.5,275.85 179.2,277.01 177.9,275.29 176.6,274.95 175.3,272.17 174.0,273.13 172.7,273.74 171.4,273.94 170.1,273.02 168.8,272.01 167.5,269.78 166.2,269.04 164.9,270.24 163.6,271.85 162.3,272.86 161.0,267.88 159.7,265.20 158.4,264.38 157.1,270.07 155.8,273.48 154.5,271.12 153.2,268.74 151.9,263.35 150.6,266.22 149.3,268.77 148.0,270.83 146.7,269.93 145.4,267.42 144.1,270.81 142.8,273.02 141.5,274.60 140.2,273.95 138.9,272.48 137.6,275.20 136.3,274.04 135.0,275.46 133.7,279.39 132.4,283.01 131.1,282.10 129.8,281.44 128.5,281.12 127.2,278.19 125.9,274.05 124.6,278.75 123.3,288.40 122.0,283.41 120.7,278.52 119.4,276.36 118.1,276.76 116.8,277.50 115.5,279.25 114.2,283.31 112.9,288.65 111.6,288.11 110.3,283.52 109.0,280.49 107.7,279.43 106.4,278.99 105.1,277.81 103.8,279.44 102.5,277.16 101.2,278.83 99.9,279.54 98.6,278.40 97.3,279.36 96.0,278.00 94.7,277.99 93.4,278.44 92.1,275.44 90.8,279.94 89.5,279.51 88.2,278.77 86.9,277.29 85.6,277.53 84.3,277.43 83.0,277.50 81.7,281.07 80.4,289.99 79.1,289.52 77.8,285.44 76.5,282.49 75.2,282.47 73.9,282.84 72.6,283.39 71.3,279.04 70.0,280.16 68.7,282.29 67.4,282.61 66.1,281.52 64.8,280.21 63.5,280.04 62.2,281.62 60.9,280.76 59.6,282.87 58.3,284.35 57.0,284.21 55.7,285.89 54.4,287.65" fill="#1a7fc4"/>
<polyline points="54.4,286.32 55.7,284.55 57.0,282.78 58.3,282.87 59.6,281.42 60.9,279.34 62.2,280.19 63.5,278.64 64.8,278.80 66.1,280.13 67.4,281.21 68.7,280.82 70.0,278.66 71.3,277.52 72.6,281.81 73.9,280.93 75.2,280.55 76.5,280.55 77.8,283.47 79.1,287.47 80.4,288.09 81.7,279.17 83.0,275.63 84.3,275.62 85.6,276.02 86.9,275.77 88.2,277.22 89.5,277.99 90.8,278.56 92.1,274.05 93.4,277.12 94.7,276.60 96.0,276.50 97.3,277.83 98.6,276.86 99.9,278.01 101.2,277.13 102.5,275.42 103.8,277.65 105.1,276.00 106.4,277.25 107.7,277.74 109.0,278.65 110.3,281.71 111.6,286.29 112.9,286.91 114.2,281.61 115.5,277.57 116.8,275.86 118.1,275.11 119.4,274.73 120.7,277.11 122.0,281.95 123.3,287.01 124.6,277.42 125.9,272.54 127.2,276.71 128.5,279.53 129.8,279.83 131.1,280.39 132.4,281.15 133.7,277.60 135.0,273.64 136.3,272.21 137.6,273.47 138.9,270.77 140.2,272.36 141.5,272.87 142.8,271.45 144.1,269.36 145.4,266.01 146.7,268.51 148.0,269.38 149.3,267.40 150.6,264.78 151.9,261.90 153.2,267.32 154.5,269.64 155.8,272.04 157.1,268.56 158.4,262.88 159.7,263.70 161.0,266.35 162.3,271.31 163.6,270.21 164.9,268.73 166.2,267.45 167.5,268.01 168.8,270.22 170.1,271.10 171.4,272.10 172.7,271.94 174.0,271.38 175.3,270.26 176.6,272.90 177.9,273.35 179.2,275.23 180.5,274.11 181.8,274.72 183.1,270.79 184.4,271.21 185.7,268.78 187.0,269.06 188.3,269.22 189.6,269.13 190.9,268.37 192.2,265.54 193.5,264.92 194.8,261.71 196.1,264.61 197.4,264.18 198.7,265.87 200.0,269.34 201.3,272.88 202.6,270.62 203.9,263.87 205.2,263.50 206.5,268.79 207.8,270.54 209.1,269.95 210.4,267.75 211.7,263.82 213.0,266.85 214.3,267.09 215.6,270.56 216.9,270.11 218.2,272.84 219.5,271.26 220.8,273.23 222.1,272.37 223.4,275.53 224.7,277.41 226.0,279.79 227.3,277.25 228.6,276.22 229.9,271.16 231.2,271.91 232.5,271.40 233.8,270.54 235.1,267.06 236.4,263.33 237.7,263.94 239.0,264.62 240.3,267.83 241.6,265.70 242.9,266.83 244.2,265.45 245.5,269.71 246.8,272.87 248.1,270.23 249.4,267.55 250.7,265.15 252.0,267.38 253.3,272.19 254.6,271.35 255.9,268.20 257.2,263.84 258.5,264.50 259.8,266.94 261.1,270.21 262.4,271.02 263.7,270.54 265.0,270.48 266.3,273.45 267.6,272.71 268.9,273.17 270.2,273.57 271.5,274.09 272.8,271.66 274.1,271.16 275.4,270.98 276.7,270.30 278.0,270.59 279.3,274.05 280.6,272.87 281.9,266.38 283.2,264.38 284.5,264.91 285.8,263.94 287.1,265.86 288.4,265.31 289.7,264.29 291.0,267.56 292.3,270.97 293.6,271.95 294.9,268.21 296.2,263.09 297.5,265.38 298.8,271.77 300.1,276.67 301.4,276.67 302.7,271.26 304.0,265.46 305.3,269.72 306.6,267.55 307.9,271.30 309.2,270.25 310.5,270.40 311.8,272.37 313.1,270.80 314.4,274.17 315.7,272.38 317.0,274.38 318.3,273.86 319.6,272.23 320.9,271.73 322.2,270.09 323.5,269.44 324.8,266.29 326.1,269.50 327.4,266.53 328.7,267.66 330.0,264.80 331.3,266.12 332.6,268.92 333.9,264.96 335.2,264.88 336.5,266.33 337.8,267.89 339.1,266.98 340.4,265.81 341.7,262.54 343.0,261.67 344.3,267.18 345.6,273.08 346.9,274.38 348.2,273.31 349.5,276.38 350.8,274.03 352.1,270.86 353.4,270.29 354.7,271.43 356.0,268.49 357.3,267.32 358.6,266.74 359.9,267.34 361.2,269.13 362.5,269.63 363.8,270.16 365.1,269.56 366.4,268.32 367.7,269.30 369.0,265.44 370.3,268.04 371.6,269.47 372.9,269.97 374.2,266.18 375.5,264.73 376.8,263.09 378.1,263.08 379.4,263.59 380.7,266.42 382.0,267.74 383.3,269.77 384.6,275.13 385.9,268.40 387.2,265.22 388.5,262.51 389.8,265.66 391.1,271.62 392.4,271.50 393.7,266.74 395.0,265.85 396.3,267.48 397.6,269.01 398.9,268.10 400.2,267.72 401.5,268.39 402.8,270.68 404.1,271.10 405.4,271.45 406.7,270.22 408.0,269.74 409.3,269.06 410.6,271.26 411.9,271.10 413.2,271.52 414.5,271.18 415.8,269.94 417.1,271.25 418.4,269.54 419.7,267.63 421.0,265.86 422.3,263.83 423.6,262.73 424.9,265.59 426.2,266.20 427.5,265.99 428.8,267.72 430.1,270.97 431.4,273.07 432.7,267.07 434.0,262.32 435.3,262.06 436.6,266.44 437.9,269.09 439.2,269.85 440.5,268.79 441.8,269.40 443.1,268.11 444.4,269.01 445.7,268.06 447.0,270.33 448.3,269.00 449.6,270.93 450.9,271.53 452.2,270.73 453.5,274.54 454.8,274.17 456.1,272.72 457.4,276.27 458.7,272.68 460.0,270.12 461.3,268.57 462.6,269.42 463.9,267.92 465.2,267.07 466.5,265.01 467.8,264.93 469.1,267.84 470.4,270.00 471.7,265.58 473.0,267.11 474.3,263.61 475.6,270.16 476.9,271.72 478.2,270.56 479.5,269.48 480.8,263.84 482.1,263.11 483.4,269.69 484.7,273.13 486.0,276.09 487.3,272.93 488.6,272.23 489.9,268.01 491.2,269.01 492.5,269.85 493.8,266.50 495.1,267.97 496.4,269.26 497.7,269.74 499.0,272.21 500.3,272.96 501.6,272.91 502.9,274.82 504.2,273.06 505.5,271.21 506.8,269.89 508.1,268.84 509.4,269.93 510.7,267.84 512.0,267.65 513.3,265.94 514.6,265.74 515.9,263.65 517.2,262.64 518.5,259.68 519.8,263.36 521.1,268.69 522.4,273.20 523.7,268.95 525.0,264.73 526.3,262.33 527.6,265.38 528.9,270.46 530.2,270.05 531.5,269.71 532.8,268.48 534.1,266.96 535.4,266.51 536.7,268.72 538.0,270.12 539.3,268.95 540.6,270.16 541.9,270.83 543.2,270.15 544.5,270.52 545.8,271.46 547.1,275.00 548.4,272.45 549.7,271.12 551.0,271.43 552.3,273.79 553.6,273.13 554.9,276.87 556.2,281.05 557.5,277.57 558.8,268.62 560.1,263.09 561.4,266.69 562.7,266.71 564.0,267.44 565.3,268.98 566.6,268.62 567.9,267.89 569.2,264.77 570.5,264.25 571.8,260.58 573.1,261.82 574.4,269.87 575.7,274.98 577.0,270.39 578.3,270.67 579.6,269.77 580.9,269.27 582.2,271.05 583.5,270.97 584.8,269.79 586.1,269.63 587.4,270.98 588.7,268.66 590.0,269.68 591.3,269.55 592.6,270.43 593.9,270.83 595.2,270.90 596.5,272.13 597.8,271.36 599.1,270.88 600.4,270.07 601.7,272.17 603.0,270.58 604.3,269.01 605.6,264.70 606.9,263.79 608.2,262.15 609.5,262.86 610.8,264.24 612.1,263.85 613.4,268.60 614.7,271.97 616.0,272.99 617.3,270.14 618.6,263.71 619.9,264.98 621.2,268.21 622.5,273.41 623.8,267.78 625.1,268.04 626.4,265.38 627.7,266.86 629.0,269.99 630.3,271.01 631.6,272.19 632.9,269.00 634.2,268.78 635.5,269.19 636.8,272.26 638.1,271.86 639.4,275.31 640.7,272.17 642.0,271.54 643.3,271.57 644.6,270.61 645.9,271.65 647.2,269.95 648.5,268.12 649.8,268.21 651.1,265.57 652.4,264.33 653.7,265.03 655.0,265.56 656.3,267.68 657.6,267.73 658.9,269.82 660.2,272.05 661.5,274.10 662.8,269.35 664.1,265.95 665.4,262.05 666.7,268.83 668.0,273.92 669.3,281.27 670.6,280.07 671.9,277.80 673.2,270.26 674.5,266.10 675.8,268.74 677.1,267.22 678.4,269.36 679.7,270.50 681.0,270.43 682.3,273.76 683.6,274.85 684.9,272.24 686.2,272.97 687.5,273.67 688.8,270.03 690.1,269.45 691.4,268.95 692.7,270.09 694.0,269.65 695.3,270.41 696.6,267.82 697.9,267.89 699.2,264.10 700.5,264.21 701.8,263.88 703.1,265.02 704.4,265.25 705.7,265.79 707.0,264.12 708.3,264.61 709.6,263.95 710.9,261.50 712.2,263.89 713.5,267.50 714.8,271.05 716.1,273.95 717.4,273.81 718.7,272.33 720.0,269.43 721.3,267.00 722.6,268.50 723.9,267.25 725.2,269.58 726.5,271.26 727.8,273.27 729.1,273.07 730.4,273.69 731.7,272.52 733.0,271.26 734.3,270.58 735.6,270.75 736.9,270.26 738.2,272.06 739.5,271.12 740.8,271.89 742.1,269.31 743.4,267.40 744.7,264.46 746.0,263.01 747.3,263.63 748.6,263.48 749.9,262.43 751.2,264.92 752.5,267.97 753.8,271.05 755.1,270.94 756.4,269.93 757.7,263.83 759.0,264.67 760.3,266.66 761.6,268.13 762.9,272.15 764.2,271.82 765.5,270.13 766.8,269.76 768.1,269.01 769.4,268.39 770.7,267.87 772.0,271.66 773.3,272.18 774.6,272.94 775.9,272.07 777.2,276.21 778.5,276.17 779.8,273.12 781.1,270.81 782.4,269.61 783.7,271.47 785.0,270.90 786.3,272.50 787.6,274.19 788.9,265.19 790.2,262.17 791.5,261.89 792.8,259.31 794.1,260.01 795.4,263.20 796.7,264.53 798.0,267.41 799.3,265.34 800.6,267.65 801.9,269.75 803.2,266.76 804.5,268.93 805.8,269.27 807.1,272.89 808.4,272.18 809.7,274.52 811.0,272.98 812.3,272.48 813.6,272.88 814.9,271.34 816.2,270.06 817.5,271.39 818.8,270.69 820.1,270.76 821.4,271.46 822.7,272.86 824.0,276.08 825.3,276.62 826.6,271.14 827.9,271.42 829.2,274.33 830.5,279.41 831.8,279.84 833.1,273.73 834.4,271.40 835.7,269.13 837.0,264.82 838.3,264.83 839.6,264.18 840.9,263.89 842.2,263.90 843.5,266.13 844.8,267.09 846.1,267.35 847.4,267.11 848.7,266.44 850.0,264.89 851.3,263.98 852.6,265.10 853.9,269.09 855.2,272.50 856.5,272.65 857.8,268.85 859.1,263.79 860.4,264.25 861.7,267.82 863.0,270.45 864.3,271.25 865.6,269.31 866.9,270.82 868.2,271.67 869.5,271.69 870.8,269.06 872.1,270.52 873.4,271.06 874.7,268.80 876.0,267.98 877.3,267.64 878.6,268.02 879.9,269.11 881.2,269.15 882.5,269.67 883.8,267.36 885.1,266.70 886.4,267.38 887.7,266.29 889.0,266.73 890.3,266.77 891.6,268.18 892.9,265.73 894.2,266.83 895.5,264.20 896.8,264.16 898.1,270.13 899.4,274.82 900.7,279.69 902.0,283.43 903.3,271.54 904.6,263.27 905.9,265.60 907.2,271.34 908.5,274.44 909.8,276.59 911.1,277.75 912.4,278.42 913.7,276.63 915.0,275.06 916.3,272.25 917.6,270.42 918.9,267.18 920.2,269.79 921.5,271.84 922.8,274.29 924.1,274.13 925.4,270.81 926.7,272.49 928.0,275.18 929.3,276.80 930.6,276.41 931.9,274.88 933.2,274.09 934.5,270.59 935.8,272.56 937.1,272.45 938.4,271.01 939.7,270.43 941.0,270.76 942.3,270.56 943.6,270.89 944.9,269.53 946.2,268.58 947.5,268.70 948.8,269.12 950.1,270.90 951.4,269.96 952.7,270.20 954.0,269.62 955.3,266.99 956.6,268.10 957.9,265.16 959.2,266.80 960.5,268.67 961.8,272.09 963.1,274.36 964.4,273.13 965.7,272.96 967.0,274.55 968.3,274.85 969.6,279.50" fill="none" stroke="#f0f" stroke-width="1.3"/>
<polyline points="54.4,288.05 55.7,286.29 57.0,284.61 58.3,284.75 59.6,283.27 60.9,281.16 62.2,282.02 63.5,280.44 64.8,280.61 66.1,281.92 67.4,283.01 68.7,282.69 70.0,280.56 71.3,279.44 72.6,283.79 73.9,283.24 75.2,282.87 76.5,282.89 77.8,285.84 79.1,289.92 80.4,290.39 81.7,281.47 83.0,277.90 84.3,277.83 85.6,277.93 86.9,277.69 88.2,279.17 89.5,279.91 90.8,280.34 92.1,275.84 93.4,278.84 94.7,278.39 96.0,278.40 97.3,279.76 98.6,278.80 99.9,279.94 101.2,279.23 102.5,277.56 103.8,279.84 105.1,278.21 106.4,279.39 107.7,279.83 109.0,280.89 110.3,283.92 111.6,288.51 112.9,289.05 114.2,283.71 115.5,279.65 116.8,277.90 118.1,277.16 119.4,276.76 120.7,278.92 122.0,283.81 123.3,288.80 124.6,279.15 125.9,274.45 127.2,278.59 128.5,281.52 129.8,281.84 131.1,282.50 132.4,283.41 133.7,279.79 135.0,275.86 136.3,274.44 137.6,275.60 138.9,272.88 140.2,274.35 141.5,275.00 142.8,273.42 144.1,271.21 145.4,267.82 146.7,270.33 148.0,271.23 149.3,269.17 150.6,266.62 151.9,263.75 153.2,269.14 154.5,271.52 155.8,273.88 157.1,270.47 158.4,264.78 159.7,265.60 161.0,268.28 162.3,273.26 163.6,272.25 164.9,270.64 166.2,269.44 167.5,270.18 168.8,272.41 170.1,273.42 171.4,274.34 172.7,274.14 174.0,273.53 175.3,272.57 176.6,275.35 177.9,275.69 179.2,277.41 180.5,276.25 181.8,276.72 183.1,272.89 184.4,273.32 185.7,270.90 187.0,270.92 188.3,270.96 189.6,270.95 190.9,270.25 192.2,267.37 193.5,266.72 194.8,263.44 196.1,266.31 197.4,265.94 198.7,267.65 200.0,271.14 201.3,274.64 202.6,272.47 203.9,265.79 205.2,265.43 206.5,270.79 207.8,272.56 209.1,271.98 210.4,269.85 211.7,265.91 213.0,268.91 214.3,269.11 215.6,272.50 216.9,272.05 218.2,274.76 219.5,273.19 220.8,275.05 222.1,274.33 223.4,277.46 224.7,279.35 226.0,281.75 227.3,279.30 228.6,278.38 229.9,273.34 231.2,274.20 232.5,273.71 233.8,272.68 235.1,269.18 236.4,265.53 237.7,266.03 239.0,266.62 240.3,269.81 241.6,267.63 242.9,268.89 244.2,267.60 245.5,271.80 246.8,275.03 248.1,272.35 249.4,269.72 250.7,267.38 252.0,269.55 253.3,274.38 254.6,273.45 255.9,270.31 257.2,266.00 258.5,266.58 259.8,269.00 261.1,272.26 262.4,273.09 263.7,272.69 265.0,272.63 266.3,275.44 267.6,274.57 268.9,275.07 270.2,275.54 271.5,275.98 272.8,273.69 274.1,273.16 275.4,272.91 276.7,272.17 278.0,272.52 279.3,276.10 280.6,274.84 281.9,268.37 283.2,266.44 284.5,266.83 285.8,265.88 287.1,267.79 288.4,267.33 289.7,266.31 291.0,269.48 292.3,272.88 293.6,273.92 294.9,270.14 296.2,265.05 297.5,267.33 298.8,273.66 300.1,278.56 301.4,278.55 302.7,273.15 304.0,267.35 305.3,271.56 306.6,269.39 307.9,273.07 309.2,272.07 310.5,272.27 311.8,274.27 313.1,272.76 314.4,276.09 315.7,274.49 317.0,276.37 318.3,275.87 319.6,274.37 320.9,273.83 322.2,272.18 323.5,271.48 324.8,268.30 326.1,271.54 327.4,268.51 328.7,269.72 330.0,266.97 331.3,268.27 332.6,271.14 333.9,267.18 335.2,267.08 336.5,268.55 337.8,270.08 339.1,269.04 340.4,267.82 341.7,264.45 343.0,263.59 344.3,268.98 345.6,274.88 346.9,276.35 348.2,275.23 349.5,278.45 350.8,276.13 352.1,272.96 353.4,272.40 354.7,273.45 356.0,270.58 357.3,269.42 358.6,268.75 359.9,269.32 361.2,270.95 362.5,271.45 363.8,271.97 365.1,271.47 366.4,270.23 367.7,271.16 369.0,267.49 370.3,270.12 371.6,271.55 372.9,272.12 374.2,268.39 375.5,267.05 376.8,265.24 378.1,265.33 379.4,265.83 380.7,268.47 382.0,269.74 383.3,271.83 384.6,277.27 385.9,270.48 387.2,267.23 388.5,264.69 389.8,267.74 391.1,273.85 392.4,273.74 393.7,268.89 395.0,267.94 396.3,269.47 397.6,271.12 398.9,270.19 400.2,269.72 401.5,270.50 402.8,272.77 404.1,273.15 405.4,273.60 406.7,272.48 408.0,272.03 409.3,271.23 410.6,273.48 411.9,273.31 413.2,273.71 414.5,273.29 415.8,272.05 417.1,273.27 418.4,271.46 419.7,269.47 421.0,267.66 422.3,265.65 423.6,264.48 424.9,267.24 426.2,267.77 427.5,267.59 428.8,269.39 430.1,272.75 431.4,274.87 432.7,268.97 434.0,264.20 435.3,264.17 436.6,268.59 437.9,271.30 439.2,272.06 440.5,270.94 441.8,271.43 443.1,270.15 444.4,271.02 445.7,270.05 447.0,272.19 448.3,270.81 449.6,272.70 450.9,273.24 452.2,272.49 453.5,276.34 454.8,275.99 456.1,274.60 457.4,278.14 458.7,274.46 460.0,271.95 461.3,270.44 462.6,271.34 463.9,269.89 465.2,269.11 466.5,267.14 467.8,266.93 469.1,269.81 470.4,271.98 471.7,267.51 473.0,269.03 474.3,265.49 475.6,271.94 476.9,273.50 478.2,272.18 479.5,271.11 480.8,265.52 482.1,264.76 483.4,271.37 484.7,274.76 486.0,277.82 487.3,274.64 488.6,273.88 489.9,269.67 491.2,270.76 492.5,271.61 493.8,268.32 495.1,269.79 496.4,271.08 497.7,271.49 499.0,274.12 500.3,274.87 501.6,274.82 502.9,276.66 504.2,274.82 505.5,273.00 506.8,271.66 508.1,270.65 509.4,271.79 510.7,269.55 512.0,269.29 513.3,267.67 514.6,267.49 515.9,265.47 517.2,264.40 518.5,261.50 519.8,265.22 521.1,270.59 522.4,275.32 523.7,271.15 525.0,266.84 526.3,264.42 527.6,267.43 528.9,272.53 530.2,272.21 531.5,271.88 532.8,270.64 534.1,268.88 535.4,268.39 536.7,270.64 538.0,272.03 539.3,270.88 540.6,272.12 541.9,272.66 543.2,271.91 544.5,272.28 545.8,273.26 547.1,276.78 548.4,274.21 549.7,272.89 551.0,273.16 552.3,275.46 553.6,274.79 554.9,278.63 556.2,282.78 557.5,279.29 558.8,270.41 560.1,264.93 561.4,268.57 562.7,268.59 564.0,269.34 565.3,270.93 566.6,270.56 567.9,269.74 569.2,266.76 570.5,266.17 571.8,262.64 573.1,263.88 574.4,271.96 575.7,277.09 577.0,272.44 578.3,272.65 579.6,271.81 580.9,271.27 582.2,273.10 583.5,272.90 584.8,271.77 586.1,271.70 587.4,273.07 588.7,270.86 590.0,272.04 591.3,271.90 592.6,272.77 593.9,273.07 595.2,273.06 596.5,274.32 597.8,273.48 599.1,272.94 600.4,272.04 601.7,273.97 603.0,272.40 604.3,270.72 605.6,266.41 606.9,265.56 608.2,263.85 609.5,264.53 610.8,265.93 612.1,265.51 613.4,270.25 614.7,273.55 616.0,274.62 617.3,271.84 618.6,265.37 619.9,266.65 621.2,269.95 622.5,275.13 623.8,269.61 625.1,269.87 626.4,267.23 627.7,268.72 629.0,271.88 630.3,272.88 631.6,274.03 632.9,270.80 634.2,270.64 635.5,271.00 636.8,274.08 638.1,273.66 639.4,277.09 640.7,273.91 642.0,273.27 643.3,273.29 644.6,272.36 645.9,273.33 647.2,271.59 648.5,269.83 649.8,270.00 651.1,267.38 652.4,266.08 653.7,266.76 655.0,267.30 656.3,269.32 657.6,269.45 658.9,271.66 660.2,273.79 661.5,275.81 662.8,271.06 664.1,267.69 665.4,263.88 666.7,270.69 668.0,275.92 669.3,283.35 670.6,282.08 671.9,279.82 673.2,272.25 674.5,268.16 675.8,270.86 677.1,269.34 678.4,271.46 679.7,272.48 681.0,272.34 682.3,275.61 683.6,276.69 684.9,274.15 686.2,274.86 687.5,275.60 688.8,271.97 690.1,271.37 691.4,270.87 692.7,271.95 694.0,271.56 695.3,272.40 696.6,269.79 697.9,269.78 699.2,265.92 700.5,265.95 701.8,265.66 703.1,266.83 704.4,267.12 705.7,267.68 707.0,265.99 708.3,266.50 709.6,265.81 710.9,263.34 712.2,265.85 713.5,269.42 714.8,272.98 716.1,275.82 717.4,275.65 718.7,274.22 720.0,271.34 721.3,268.90 722.6,270.41 723.9,269.02 725.2,271.43 726.5,273.05 727.8,275.17 729.1,275.12 730.4,275.68 731.7,274.54 733.0,273.30 734.3,272.70 735.6,272.98 736.9,272.42 738.2,274.26 739.5,273.25 740.8,273.87 742.1,271.25 743.4,269.29 744.7,266.40 746.0,264.86 747.3,265.39 748.6,265.30 749.9,264.37 751.2,266.83 752.5,270.00 753.8,273.13 755.1,273.04 756.4,272.02 757.7,265.99 759.0,266.79 760.3,268.83 761.6,270.20 762.9,274.24 764.2,273.82 765.5,272.09 766.8,271.76 768.1,270.96 769.4,270.34 770.7,269.83 772.0,273.49 773.3,274.11 774.6,274.91 775.9,274.06 777.2,278.28 778.5,278.16 779.8,275.07 781.1,272.68 782.4,271.55 783.7,273.49 785.0,272.80 786.3,274.33 787.6,276.02 788.9,266.92 790.2,263.93 791.5,263.71 792.8,261.23 794.1,261.87 795.4,265.08 796.7,266.42 798.0,269.26 799.3,267.15 800.6,269.51 801.9,271.54 803.2,268.62 804.5,270.83 805.8,271.24 807.1,274.80 808.4,274.15 809.7,276.53 811.0,275.02 812.3,274.59 813.6,275.00 814.9,273.42 816.2,272.07 817.5,273.37 818.8,272.63 820.1,272.72 821.4,273.48 822.7,274.87 824.0,278.08 825.3,278.66 826.6,273.21 827.9,273.46 829.2,276.39 830.5,281.50 831.8,281.90 833.1,275.72 834.4,273.41 835.7,271.04 837.0,266.72 838.3,266.71 839.6,266.04 840.9,265.66 842.2,265.66 843.5,267.97 844.8,268.95 846.1,269.28 847.4,269.10 848.7,268.47 850.0,266.98 851.3,266.11 852.6,267.24 853.9,271.19 855.2,274.49 856.5,274.61 857.8,270.72 859.1,265.64 860.4,266.14 861.7,269.57 863.0,272.17 864.3,273.03 865.6,271.13 866.9,272.62 868.2,273.49 869.5,273.54 870.8,270.87 872.1,272.19 873.4,272.81 874.7,270.58 876.0,269.69 877.3,269.34 878.6,269.79 879.9,270.87 881.2,270.91 882.5,271.64 883.8,269.42 885.1,268.73 886.4,269.36 887.7,268.33 889.0,268.80 890.3,268.91 891.6,270.32 892.9,267.81 894.2,268.71 895.5,266.00 896.8,266.01 898.1,272.04 899.4,276.73 900.7,281.67 902.0,285.35 903.3,273.48 904.6,265.25 905.9,267.53 907.2,273.34 908.5,276.36 909.8,278.46 911.1,279.74 912.4,280.36 913.7,278.47 915.0,276.96 916.3,274.10 917.6,272.29 918.9,269.07 920.2,271.67 921.5,273.73 922.8,276.26 924.1,276.04 925.4,272.71 926.7,274.45 928.0,277.20 929.3,278.90 930.6,278.53 931.9,277.02 933.2,276.25 934.5,272.53 935.8,274.61 937.1,274.58 938.4,273.08 939.7,272.44 941.0,272.69 942.3,272.42 943.6,272.73 944.9,271.37 946.2,270.45 947.5,270.47 948.8,270.91 950.1,272.64 951.4,271.74 952.7,271.98 954.0,271.37 955.3,268.85 956.6,269.97 957.9,266.98 959.2,268.62 960.5,270.48 961.8,273.90 963.1,276.24 964.4,275.01 965.7,274.88 967.0,276.38 968.3,276.65 969.6,281.33" fill="none" stroke="#fff" stroke-width="1.15"/>
<polyline points="54.5,345.23 55.9,354.87 57.3,347.01 58.7,351.80 60.1,351.69 61.5,354.24 62.9,354.51 64.3,354.03 65.7,356.99 67.1,344.41 68.5,353.30 69.9,354.94 71.3,355.56 72.7,351.56 74.1,356.02 75.5,349.36 76.9,355.33 78.3,356.01 79.7,349.35 81.1,353.00 82.5,345.60 83.9,350.37 85.3,357.04 86.7,352.77 88.1,352.41 89.5,355.83 90.9,353.23 92.3,346.69 93.7,355.61 95.1,353.54 96.5,354.18 97.9,356.66 99.3,355.95 100.7,351.76 102.1,356.07 103.5,353.16 104.9,348.60 106.3,354.80 107.7,355.30 109.1,351.55 110.5,353.34 111.9,352.89 113.3,356.80 114.7,348.44 116.1,355.95 117.5,356.83 118.9,348.25 120.3,351.50 121.7,349.36 123.1,353.52 124.5,354.81 125.9,356.80 127.3,355.73 128.7,354.37 130.1,355.07 131.5,345.04 132.9,354.19 134.3,354.56 135.7,345.99 137.1,357.08 138.5,350.26 139.9,352.01 141.3,351.94 142.7,346.37 144.1,353.77 145.5,351.84 146.9,348.14 148.3,349.74 149.7,351.79 151.1,343.88 152.5,354.27 153.9,351.88 155.3,352.15 156.7,348.30 158.1,348.37 159.5,345.66 160.9,346.18 162.3,342.63 163.7,355.03 165.1,350.64 166.5,344.90 167.9,343.17 169.3,344.48 170.7,344.00 172.1,351.29 173.5,350.32 174.9,344.33 176.3,341.84 177.7,346.28 179.1,342.40 180.5,346.50 181.9,346.32 183.3,355.40 184.7,351.12 186.1,338.94 187.5,340.06 188.9,345.18 190.3,344.25 191.7,340.53 193.1,339.08 194.5,338.96 195.9,343.88 197.3,337.46 198.7,344.37 200.1,344.73 201.5,344.11 202.9,344.87 204.3,348.03 205.7,342.69 207.1,342.25 208.5,340.41 209.9,342.03 211.3,343.15 212.7,344.65 214.1,341.03 215.5,346.83 216.9,340.21 218.3,341.40 219.7,338.66 221.1,351.04 222.5,333.51 223.9,342.26 225.3,346.39 226.7,343.72 228.1,338.12 229.5,343.12 230.9,346.36 232.3,340.58 233.7,340.45 235.1,340.08 236.5,345.76 237.9,355.56 239.3,343.61 240.7,342.26 242.1,343.34 243.5,345.19 244.9,347.30 246.3,337.33 247.7,339.85 249.1,340.85 250.5,346.10 251.9,344.94 253.3,355.98 254.7,338.82 256.1,354.53 257.5,336.42 258.9,337.12 260.3,338.61 261.7,356.90 263.1,347.98 264.5,341.22 265.9,354.85 267.3,336.69 268.7,340.23 270.1,349.22 271.5,342.46 272.9,340.59 274.3,345.14 275.7,339.44 277.1,337.83 278.5,348.08 279.9,342.66 281.3,347.73 282.7,354.15 284.1,343.48 285.5,340.30 286.9,348.53 288.3,355.57 289.7,352.65 291.1,343.48 292.5,338.54 293.9,357.68 295.3,348.73 296.7,347.22 298.1,356.37 299.5,337.21 300.9,346.46 302.3,356.53 303.7,356.43 305.1,338.46 306.5,346.22 307.9,338.22 309.3,337.82 310.7,350.33 312.1,344.76 313.5,347.91 314.9,341.32 316.3,348.27 317.7,339.40 319.1,344.50 320.5,343.84 321.9,350.30 323.3,343.31 324.7,354.14 326.1,343.53 327.5,341.14 328.9,351.43 330.3,347.55 331.7,350.36 333.1,342.58 334.5,351.05 335.9,356.32 337.3,341.92 338.7,352.83 340.1,338.54 341.5,350.30 342.9,339.71 344.3,347.47 345.7,351.74 347.1,345.71 348.5,353.11 349.9,348.34 351.3,349.34 352.7,349.10 354.1,342.72 355.5,356.59 356.9,344.41 358.3,345.09 359.7,338.73 361.1,338.26 362.5,341.45 363.9,340.61 365.3,340.78 366.7,340.68 368.1,340.10 369.5,339.79 370.9,341.17 372.3,340.95 373.7,340.09 375.1,339.13 376.5,341.84 377.9,339.91 379.3,340.38 380.7,339.74 382.1,341.51 383.5,340.52 384.9,341.17 386.3,342.78 387.7,348.04 389.1,340.42 390.5,340.33 391.9,345.33 393.3,341.96 394.7,351.37 396.1,341.58 397.5,340.53 398.9,340.41 400.3,347.81 401.7,338.76 403.1,344.61 404.5,340.67 405.9,340.13 407.3,353.97 408.7,347.00 410.1,339.77 411.5,355.86 412.9,342.42 414.3,347.85 415.7,338.88 417.1,343.76 418.5,354.10 419.9,337.65 421.3,341.11 422.7,350.55 424.1,342.99 425.5,343.18 426.9,336.90 428.3,356.92 429.7,342.75 431.1,343.75 432.5,345.36 433.9,336.47 435.3,341.35 436.7,347.52 438.1,352.53 439.5,338.37 440.9,355.88 442.3,342.37 443.7,342.05 445.1,350.91 446.5,337.06 447.9,340.78 449.3,336.63 450.7,340.35 452.1,349.23 453.5,343.75 454.9,343.17 456.3,347.84 457.7,349.53 459.1,342.87 460.5,354.45 461.9,343.41 463.3,357.18 464.7,346.79 466.1,343.59 467.5,355.50 468.9,346.03 470.3,337.42 471.7,341.96 473.1,342.67 474.5,341.61 475.9,357.20 477.3,350.57 478.7,344.74 480.1,337.83 481.5,350.26 482.9,351.45 484.3,339.13 485.7,344.08 487.1,342.33 488.5,348.50 489.9,337.87 491.3,352.92 492.7,352.28 494.1,341.86 495.5,349.08 496.9,355.67 498.3,346.58 499.7,338.71 501.1,339.80 502.5,345.96 503.9,342.32 505.3,349.13 506.7,337.82 508.1,336.64 509.5,355.99 510.9,340.45 512.3,348.84 513.7,337.77 515.1,340.57 516.5,340.43 517.9,353.16 519.3,347.22 520.7,348.98 522.1,341.80 523.5,337.35 524.9,345.09 526.3,357.73 527.7,354.47 529.1,351.32 530.5,351.14 531.9,337.33 533.3,344.28 534.7,337.94 536.1,348.47 537.5,347.18 538.9,336.35 540.3,343.88 541.7,345.72 543.1,350.92 544.5,355.52 545.9,357.17 547.3,337.02 548.7,340.35 550.1,340.38 551.5,339.93 552.9,341.93 554.3,342.58 555.7,341.76 557.1,340.22 558.5,349.74 559.9,349.81 561.3,344.45 562.7,340.45 564.1,336.37 565.5,340.05 566.9,342.18 568.3,349.81 569.7,340.26 571.1,337.89 572.5,357.01 573.9,336.65 575.3,343.24 576.7,354.74 578.1,343.27 579.5,343.51 580.9,349.07 582.3,352.89 583.7,347.77 585.1,355.54 586.5,346.49 587.9,349.33 589.3,344.35 590.7,346.22 592.1,338.04 593.5,340.84 594.9,347.97 596.3,353.08 597.7,349.28 599.1,338.01 600.5,346.43 601.9,340.69 603.3,342.09 604.7,338.15 606.1,338.31 607.5,342.18 608.9,339.22 610.3,338.61 611.7,338.32 613.1,337.71 614.5,340.46 615.9,336.50 617.3,337.00 618.7,346.07 620.1,338.49 621.5,336.94 622.9,357.14 624.3,339.16 625.7,338.56 627.1,336.77 628.5,339.46 629.9,336.88 631.3,338.15 632.7,347.96 634.1,337.10 635.5,343.42 636.9,340.95 638.3,353.11 639.7,342.42 641.1,357.62 642.5,338.70 643.9,352.21 645.3,343.53 646.7,352.84 648.1,347.24 649.5,345.50 650.9,342.42 652.3,337.15 653.7,347.95 655.1,348.57 656.5,350.47 657.9,338.48 659.3,349.53 660.7,346.66 662.1,341.05 663.5,341.24 664.9,349.32 666.3,343.73 667.7,339.31 669.1,350.24 670.5,347.61 671.9,346.32 673.3,354.56 674.7,344.39 676.1,348.40 677.5,348.32 678.9,350.57 680.3,342.27 681.7,337.04 683.1,341.90 684.5,348.61 685.9,339.11 687.3,341.40 688.7,344.86 690.1,339.42 691.5,351.61 692.9,351.79 694.3,339.71 695.7,339.92 697.1,339.59 698.5,346.03 699.9,342.38 701.3,342.67 702.7,348.54 704.1,343.68 705.5,337.61 706.9,340.50 708.3,352.42 709.7,337.68 711.1,346.82 712.5,340.91 713.9,340.74 715.3,341.59 716.7,341.94 718.1,351.24 719.5,342.84 720.9,338.74 722.3,347.23 723.7,352.99 725.1,339.24 726.5,338.94 727.9,337.59 729.3,349.40 730.7,354.93 732.1,345.99 733.5,337.18 734.9,337.36 736.3,340.77 737.7,346.76 739.1,340.33 740.5,357.31 741.9,337.55 743.3,337.70 744.7,357.46 746.1,337.76 747.5,340.51 748.9,346.66 750.3,341.63 751.7,337.55 753.1,349.37 754.5,336.55 755.9,338.47 757.3,344.59 758.7,342.11 760.1,353.37 761.5,351.09 762.9,347.62 764.3,351.52 765.7,356.06 767.1,343.79 768.5,338.91 769.9,353.87 771.3,356.23 772.7,342.38 774.1,346.25 775.5,348.23 776.9,337.34 778.3,337.85 779.7,338.93 781.1,340.34 782.5,341.58 783.9,338.31 785.3,357.70 786.7,344.47 788.1,356.30 789.5,351.69 790.9,352.55 792.3,349.60 793.7,348.53 795.1,340.63 796.5,339.41 797.9,341.05 799.3,351.45 800.7,345.75 802.1,353.38 803.5,353.09 804.9,342.11 806.3,348.92 807.7,341.28 809.1,336.77 810.5,345.32 811.9,338.72 813.3,340.40 814.7,342.69 816.1,350.06 817.5,344.12 818.9,349.66 820.3,343.27 821.7,339.72 823.1,353.79 824.5,357.17 825.9,352.91 827.3,356.94 828.7,339.00 830.1,341.28 831.5,338.59 832.9,345.44 834.3,348.73 835.7,339.88 837.1,338.00 838.5,343.87 839.9,349.52 841.3,353.76 842.7,336.83 844.1,339.06 845.5,339.17 846.9,356.92 848.3,348.54 849.7,340.52 851.1,344.95 852.5,337.90 853.9,350.24 855.3,346.90 856.7,343.02 858.1,337.22 859.5,353.00 860.9,338.38 862.3,340.45 863.7,348.05 865.1,348.63 866.5,355.41 867.9,340.18 869.3,349.03 870.7,336.71 872.1,357.48 873.5,337.15 874.9,340.75 876.3,350.64 877.7,357.34 879.1,342.76 880.5,346.36 881.9,349.14 883.3,356.19 884.7,336.81 886.1,340.95 887.5,342.52 888.9,339.89 890.3,340.27 891.7,339.32 893.1,347.56 894.5,336.93 895.9,343.21 897.3,351.89 898.7,340.70 900.1,348.35 901.5,345.97 902.9,343.45 904.3,338.13 905.7,351.61 907.1,344.19 908.5,348.41 909.9,336.39 911.3,336.39 912.7,338.90 914.1,349.56 915.5,339.09 916.9,349.91 918.3,344.63 919.7,353.15 921.1,341.64 922.5,344.34 923.9,339.00 925.3,340.55 926.7,338.21 928.1,340.60 929.5,345.40 930.9,344.11 932.3,352.51 933.7,339.17 935.1,343.28 936.5,354.67 937.9,355.98 939.3,338.71 940.7,341.70 942.1,336.88 943.5,340.07 944.9,352.06 946.3,357.67 947.7,351.28 949.1,338.42 950.5,353.09 951.9,343.86 953.3,340.53 954.7,341.19 956.1,339.76 957.5,341.04 958.9,339.42 960.3,340.86 961.7,341.38 963.1,342.42 964.5,343.29 965.9,340.36 967.3,348.65 968.7,338.81" fill="none" stroke="#c0c" stroke-width="1"/>
<polyline points="54.5,344.43 55.9,354.07 57.3,346.21 58.7,351.00 60.1,350.89 61.5,353.44 62.9,353.71 64.3,353.23 65.7,356.19 67.1,343.61 68.5,352.50 69.9,354.14 71.3,354.76 72.7,350.76 74.1,355.22 75.5,348.56 76.9,354.53 78.3,355.21 79.7,348.55 81.1,352.20 82.5,344.80 83.9,349.57 85.3,356.24 86.7,351.97 88.1,351.61 89.5,355.03 90.9,352.43 92.3,345.89 93.7,354.81 95.1,352.74 96.5,353.38 97.9,355.86 99.3,355.15 100.7,350.96 102.1,355.27 103.5,352.36 104.9,347.80 106.3,354.00 107.7,354.50 109.1,350.75 110.5,352.54 111.9,352.09 113.3,356.00 114.7,347.64 116.1,355.15 117.5,356.03 118.9,347.45 120.3,350.70 121.7,348.56 123.1,352.72 124.5,354.01 125.9,356.00 127.3,354.93 128.7,353.57 130.1,354.27 131.5,344.24 132.9,353.39 134.3,353.76 135.7,345.19 137.1,356.28 138.5,349.46 139.9,351.21 141.3,351.14 142.7,345.57 144.1,352.97 145.5,351.04 146.9,347.34 148.3,348.94 149.7,350.99 151.1,343.08 152.5,353.47 153.9,351.08 155.3,351.35 156.7,347.50 158.1,347.57 159.5,344.86 160.9,345.38 162.3,341.83 163.7,354.23 165.1,349.84 166.5,344.10 167.9,342.37 169.3,343.68 170.7,343.20 172.1,350.49 173.5,349.52 174.9,343.53 176.3,341.04 177.7,345.48 179.1,341.60 180.5,345.70 181.9,345.52 183.3,354.60 184.7,350.32 186.1,338.14 187.5,339.26 188.9,344.38 190.3,343.45 191.7,339.73 193.1,338.28 194.5,338.16 195.9,343.08 197.3,336.66 198.7,343.57 200.1,343.93 201.5,343.31 202.9,344.07 204.3,347.23 205.7,341.89 207.1,341.45 208.5,339.61 209.9,341.23 211.3,342.35 212.7,343.85 214.1,340.23 215.5,346.03 216.9,339.41 218.3,340.60 219.7,337.86 221.1,350.24 222.5,332.71 223.9,341.46 225.3,345.59 226.7,342.92 228.1,337.32 229.5,342.32 230.9,345.56 232.3,339.78 233.7,339.65 235.1,339.28 236.5,344.96 237.9,354.76 239.3,342.81 240.7,341.46 242.1,342.54 243.5,344.39 244.9,346.50 246.3,336.53 247.7,339.05 249.1,340.05 250.5,345.30 251.9,344.14 253.3,355.18 254.7,338.02 256.1,353.73 257.5,335.62 258.9,336.32 260.3,337.81 261.7,356.10 263.1,347.18 264.5,340.42 265.9,354.05 267.3,335.89 268.7,339.43 270.1,348.42 271.5,341.66 272.9,339.79 274.3,344.34 275.7,338.64 277.1,337.03 278.5,347.28 279.9,341.86 281.3,346.93 282.7,353.35 284.1,342.68 285.5,339.50 286.9,347.73 288.3,354.77 289.7,351.85 291.1,342.68 292.5,337.74 293.9,356.88 295.3,347.93 296.7,346.42 298.1,355.57 299.5,336.41 300.9,345.66 302.3,355.73 303.7,355.63 305.1,337.66 306.5,345.42 307.9,337.42 309.3,337.02 310.7,349.53 312.1,343.96 313.5,347.11 314.9,340.52 316.3,347.47 317.7,338.60 319.1,343.70 320.5,343.04 321.9,349.50 323.3,342.51 324.7,353.34 326.1,342.73 327.5,340.34 328.9,350.63 330.3,346.75 331.7,349.56 333.1,341.78 334.5,350.25 335.9,355.52 337.3,341.12 338.7,352.03 340.1,337.74 341.5,349.50 342.9,338.91 344.3,346.67 345.7,350.94 347.1,344.91 348.5,352.31 349.9,347.54 351.3,348.54 352.7,348.30 354.1,341.92 355.5,355.79 356.9,343.61 358.3,344.29 359.7,337.93 361.1,337.46 362.5,340.65 363.9,339.81 365.3,339.98 366.7,339.88 368.1,339.30 369.5,338.99 370.9,340.37 372.3,340.15 373.7,339.29 375.1,338.33 376.5,341.04 377.9,339.11 379.3,339.58 380.7,338.94 382.1,340.71 383.5,339.72 384.9,340.37 386.3,341.98 387.7,347.24 389.1,339.62 390.5,339.53 391.9,344.53 393.3,341.16 394.7,350.57 396.1,340.78 397.5,339.73 398.9,339.61 400.3,347.01 401.7,337.96 403.1,343.81 404.5,339.87 405.9,339.33 407.3,353.17 408.7,346.20 410.1,338.97 411.5,355.06 412.9,341.62 414.3,347.05 415.7,338.08 417.1,342.96 418.5,353.30 419.9,336.85 421.3,340.31 422.7,349.75 424.1,342.19 425.5,342.38 426.9,336.10 428.3,356.12 429.7,341.95 431.1,342.95 432.5,344.56 433.9,335.67 435.3,340.55 436.7,346.72 438.1,351.73 439.5,337.57 440.9,355.08 442.3,341.57 443.7,341.25 445.1,350.11 446.5,336.26 447.9,339.98 449.3,335.83 450.7,339.55 452.1,348.43 453.5,342.95 454.9,342.37 456.3,347.04 457.7,348.73 459.1,342.07 460.5,353.65 461.9,342.61 463.3,356.38 464.7,345.99 466.1,342.79 467.5,354.70 468.9,345.23 470.3,336.62 471.7,341.16 473.1,341.87 474.5,340.81 475.9,356.40 477.3,349.77 478.7,343.94 480.1,337.03 481.5,349.46 482.9,350.65 484.3,338.33 485.7,343.28 487.1,341.53 488.5,347.70 489.9,337.07 491.3,352.12 492.7,351.48 494.1,341.06 495.5,348.28 496.9,354.87 498.3,345.78 499.7,337.91 501.1,339.00 502.5,345.16 503.9,341.52 505.3,348.33 506.7,337.02 508.1,335.84 509.5,355.19 510.9,339.65 512.3,348.04 513.7,336.97 515.1,339.77 516.5,339.63 517.9,352.36 519.3,346.42 520.7,348.18 522.1,341.00 523.5,336.55 524.9,344.29 526.3,356.93 527.7,353.67 529.1,350.52 530.5,350.34 531.9,336.53 533.3,343.48 534.7,337.14 536.1,347.67 537.5,346.38 538.9,335.55 540.3,343.08 541.7,344.92 543.1,350.12 544.5,354.72 545.9,356.37 547.3,336.22 548.7,339.55 550.1,339.58 551.5,339.13 552.9,341.13 554.3,341.78 555.7,340.96 557.1,339.42 558.5,348.94 559.9,349.01 561.3,343.65 562.7,339.65 564.1,335.57 565.5,339.25 566.9,341.38 568.3,349.01 569.7,339.46 571.1,337.09 572.5,356.21 573.9,335.85 575.3,342.44 576.7,353.94 578.1,342.47 579.5,342.71 580.9,348.27 582.3,352.09 583.7,346.97 585.1,354.74 586.5,345.69 587.9,348.53 589.3,343.55 590.7,345.42 592.1,337.24 593.5,340.04 594.9,347.17 596.3,352.28 597.7,348.48 599.1,337.21 600.5,345.63 601.9,339.89 603.3,341.29 604.7,337.35 606.1,337.51 607.5,341.38 608.9,338.42 610.3,337.81 611.7,337.52 613.1,336.91 614.5,339.66 615.9,335.70 617.3,336.20 618.7,345.27 620.1,337.69 621.5,336.14 622.9,356.34 624.3,338.36 625.7,337.76 627.1,335.97 628.5,338.66 629.9,336.08 631.3,337.35 632.7,347.16 634.1,336.30 635.5,342.62 636.9,340.15 638.3,352.31 639.7,341.62 641.1,356.82 642.5,337.90 643.9,351.41 645.3,342.73 646.7,352.04 648.1,346.44 649.5,344.70 650.9,341.62 652.3,336.35 653.7,347.15 655.1,347.77 656.5,349.67 657.9,337.68 659.3,348.73 660.7,345.86 662.1,340.25 663.5,340.44 664.9,348.52 666.3,342.93 667.7,338.51 669.1,349.44 670.5,346.81 671.9,345.52 673.3,353.76 674.7,343.59 676.1,347.60 677.5,347.52 678.9,349.77 680.3,341.47 681.7,336.24 683.1,341.10 684.5,347.81 685.9,338.31 687.3,340.60 688.7,344.06 690.1,338.62 691.5,350.81 692.9,350.99 694.3,338.91 695.7,339.12 697.1,338.79 698.5,345.23 699.9,341.58 701.3,341.87 702.7,347.74 704.1,342.88 705.5,336.81 706.9,339.70 708.3,351.62 709.7,336.88 711.1,346.02 712.5,340.11 713.9,339.94 715.3,340.79 716.7,341.14 718.1,350.44 719.5,342.04 720.9,337.94 722.3,346.43 723.7,352.19 725.1,338.44 726.5,338.14 727.9,336.79 729.3,348.60 730.7,354.13 732.1,345.19 733.5,336.38 734.9,336.56 736.3,339.97 737.7,345.96 739.1,339.53 740.5,356.51 741.9,336.75 743.3,336.90 744.7,356.66 746.1,336.96 747.5,339.71 748.9,345.86 750.3,340.83 751.7,336.75 753.1,348.57 754.5,335.75 755.9,337.67 757.3,343.79 758.7,341.31 760.1,352.57 761.5,350.29 762.9,346.82 764.3,350.72 765.7,355.26 767.1,342.99 768.5,338.11 769.9,353.07 771.3,355.43 772.7,341.58 774.1,345.45 775.5,347.43 776.9,336.54 778.3,337.05 779.7,338.13 781.1,339.54 782.5,340.78 783.9,337.51 785.3,356.90 786.7,343.67 788.1,355.50 789.5,350.89 790.9,351.75 792.3,348.80 793.7,347.73 795.1,339.83 796.5,338.61 797.9,340.25 799.3,350.65 800.7,344.95 802.1,352.58 803.5,352.29 804.9,341.31 806.3,348.12 807.7,340.48 809.1,335.97 810.5,344.52 811.9,337.92 813.3,339.60 814.7,341.89 816.1,349.26 817.5,343.32 818.9,348.86 820.3,342.47 821.7,338.92 823.1,352.99 824.5,356.37 825.9,352.11 827.3,356.14 828.7,338.20 830.1,340.48 831.5,337.79 832.9,344.64 834.3,347.93 835.7,339.08 837.1,337.20 838.5,343.07 839.9,348.72 841.3,352.96 842.7,336.03 844.1,338.26 845.5,338.37 846.9,356.12 848.3,347.74 849.7,339.72 851.1,344.15 852.5,337.10 853.9,349.44 855.3,346.10 856.7,342.22 858.1,336.42 859.5,352.20 860.9,337.58 862.3,339.65 863.7,347.25 865.1,347.83 866.5,354.61 867.9,339.38 869.3,348.23 870.7,335.91 872.1,356.68 873.5,336.35 874.9,339.95 876.3,349.84 877.7,356.54 879.1,341.96 880.5,345.56 881.9,348.34 883.3,355.39 884.7,336.01 886.1,340.15 887.5,341.72 888.9,339.09 890.3,339.47 891.7,338.52 893.1,346.76 894.5,336.13 895.9,342.41 897.3,351.09 898.7,339.90 900.1,347.55 901.5,345.17 902.9,342.65 904.3,337.33 905.7,350.81 907.1,343.39 908.5,347.61 909.9,335.59 911.3,335.59 912.7,338.10 914.1,348.76 915.5,338.29 916.9,349.11 918.3,343.83 919.7,352.35 921.1,340.84 922.5,343.54 923.9,338.20 925.3,339.75 926.7,337.41 928.1,339.80 929.5,344.60 930.9,343.31 932.3,351.71 933.7,338.37 935.1,342.48 936.5,353.87 937.9,355.18 939.3,337.91 940.7,340.90 942.1,336.08 943.5,339.27 944.9,351.26 946.3,356.87 947.7,350.48 949.1,337.62 950.5,352.29 951.9,343.06 953.3,339.73 954.7,340.39 956.1,338.96 957.5,340.24 958.9,338.62 960.3,340.06 961.7,340.58 963.1,341.62 964.5,342.49 965.9,339.56 967.3,347.85 968.7,338.01" fill="none" stroke="#22ff22" stroke-width="1.2"/>
</svg>
<div class="r" style="left:5px;top:405px;width:66.2px;height:19px;border:1px solid #c8c8c8;border-bottom-color:#bdbdbd;border-radius:3px;"></div>
<div class="r" style="left:10.5px;top:404px;width:41.3px;height:2px;background:#f4f4f4;"></div>
<div class="t" style="left:12px;top:400.67px;font-size:7px;line-height:8.40px;color:#666;">Smoothing</div>
<div class="t" style="left:14.5px;top:409.90px;font-size:9.3px;line-height:11.16px;color:#222;">0:00:10</div>
<svg style="left:57.400000000000006px;top:413.4px" width="6" height="4"><path d="M0 0 L4.8 0 L2.4 2.7 Z" fill="#555"/></svg>
<div class="r" style="left:82px;top:405px;width:66.19999999999999px;height:19px;border:1px solid #c8c8c8;border-bottom-color:#bdbdbd;border-radius:3px;"></div>
<div class="r" style="left:87.5px;top:404px;width:23.4px;height:2px;background:#f4f4f4;"></div>
<div class="t" style="left:89px;top:400.67px;font-size:7px;line-height:8.40px;color:#666;">Units</div>
<div class="t" style="left:91.5px;top:409.90px;font-size:9.3px;line-height:11.16px;color:#222;">english</div>
<svg style="left:134.39999999999998px;top:413.4px" width="6" height="4"><path d="M0 0 L4.8 0 L2.4 2.7 Z" fill="#555"/></svg>
<div class="r" style="left:159px;top:405px;width:66.19999999999999px;height:19px;border:1px solid #c8c8c8;border-bottom-color:#bdbdbd;border-radius:3px;"></div>
<div class="r" style="left:164.5px;top:404px;width:27px;height:2px;background:#f4f4f4;"></div>
<div class="t" style="left:166px;top:400.67px;font-size:7px;line-height:8.40px;color:#666;">X-Axis</div>
<div class="t" style="left:168.5px;top:409.90px;font-size:9.3px;line-height:11.16px;color:#222;">time</div>
<svg style="left:211.39999999999998px;top:413.4px" width="6" height="4"><path d="M0 0 L4.8 0 L2.4 2.7 Z" fill="#555"/></svg>
<div class="t" style="left:845px;top:408.26px;font-size:8.6px;line-height:10.32px;color:#bdbdbd;letter-spacing:-0.15px;">SEND TO DEVICE</div>
<div class="t" style="left:932px;top:408.26px;font-size:8.6px;line-height:10.32px;color:#2f7fd6;letter-spacing:-0.15px;">CANCEL</div>
<div class="t" style="left:982px;top:408.26px;font-size:8.6px;line-height:10.32px;color:#2f7fd6;letter-spacing:-0.15px;">ACCEPT</div>
</body></html>
